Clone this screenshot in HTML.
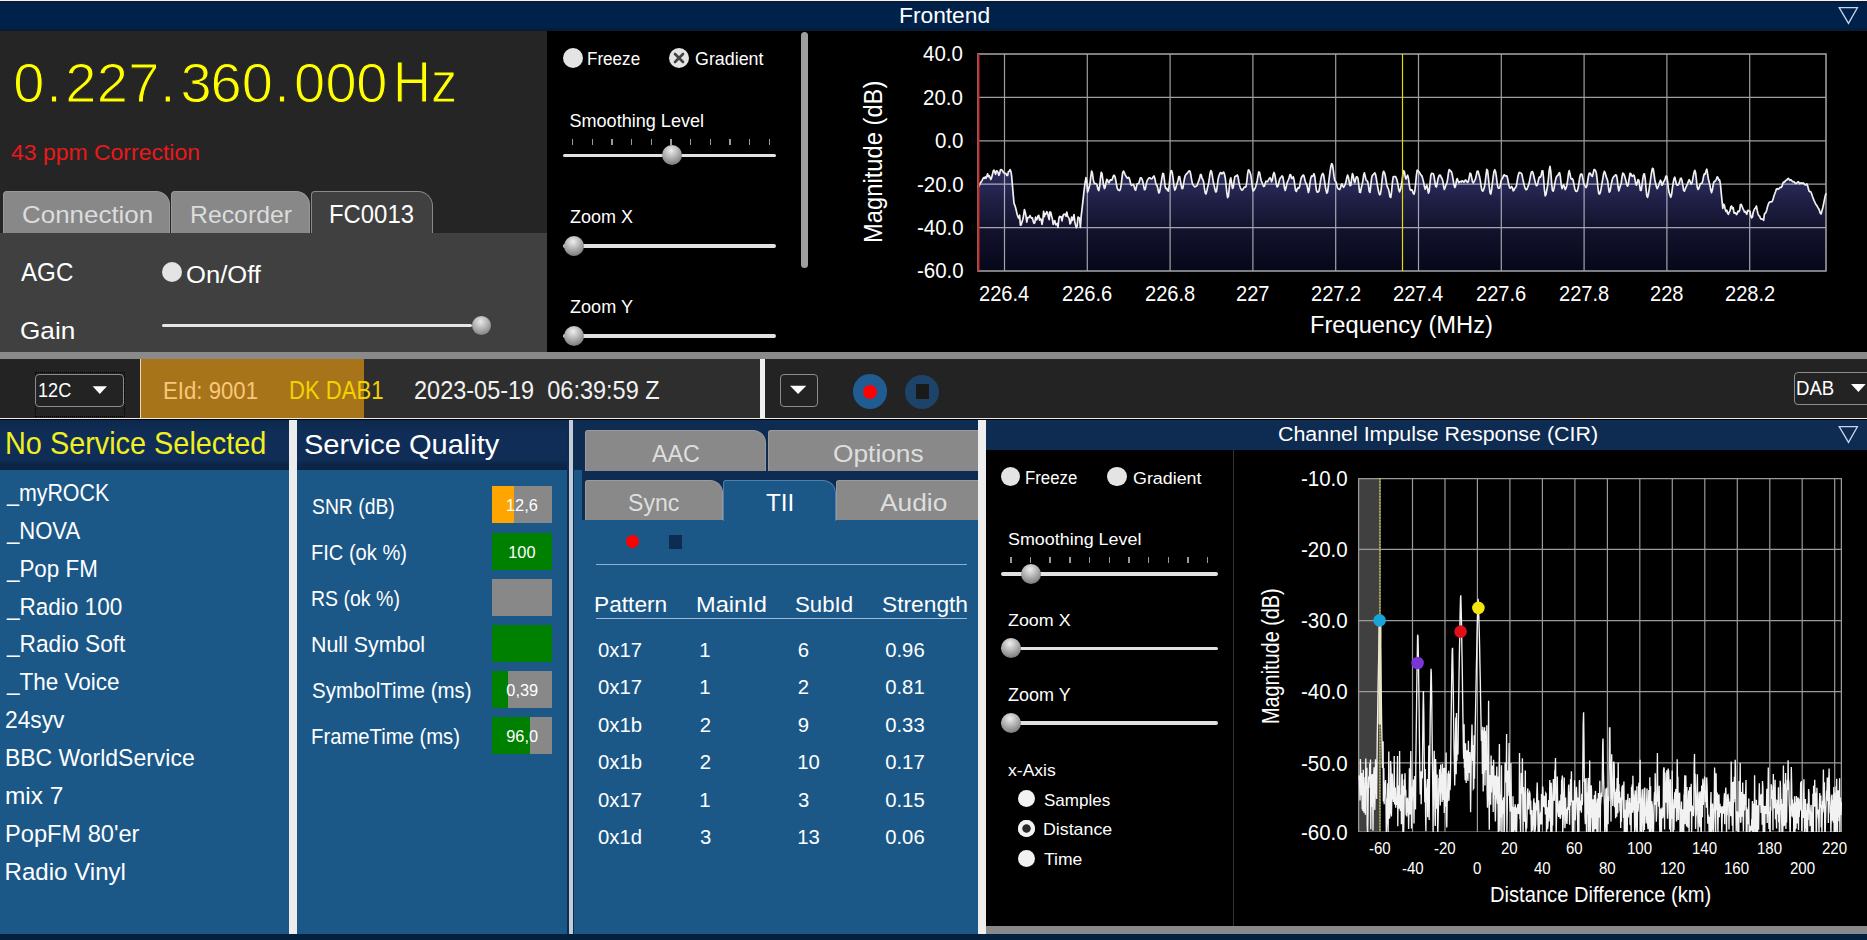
<!DOCTYPE html>
<html><head><meta charset="utf-8"><style>
html,body{margin:0;padding:0;}
body{width:1867px;height:940px;overflow:hidden;position:relative;background:#000;font-family:'Liberation Sans',sans-serif;}
body>div,body>svg{position:absolute;}
.t{white-space:nowrap;line-height:1;transform-origin:0 0;}
</style></head><body>
<div style="left:0px;top:0px;width:1867px;height:1px;background:#f4f4f4;"></div>
<div style="left:0px;top:1px;width:1867px;height:30px;background:linear-gradient(#081a33 0px,#00224a 4px,#00224a 26px,#0a1a30 30px);"></div>
<div class="t" style="left:898.62px;top:5px;font-size:22.07px;color:#fff;transform:scaleX(1.0314);">Frontend</div>
<svg style="left:1836px;top:5px" width="24" height="21"><path d="M3.2 2.7 L21.4 2.7 L12.5 18.4 Z" fill="none" stroke="#c8d6ec" stroke-width="1.3"/></svg>
<div style="left:0px;top:31px;width:547px;height:321px;background:#252525;"></div>
<div class="t" style="left:13.16px;top:55px;font-size:56px;color:#ffff00;-webkit-text-stroke:1.1px #252525;paint-order:normal">0</div>
<div class="t" style="left:65.30px;top:55px;font-size:56px;color:#ffff00;-webkit-text-stroke:1.1px #252525;paint-order:normal">2</div>
<div class="t" style="left:96.80px;top:55px;font-size:56px;color:#ffff00;-webkit-text-stroke:1.1px #252525;paint-order:normal">2</div>
<div class="t" style="left:128.30px;top:55px;font-size:56px;color:#ffff00;-webkit-text-stroke:1.1px #252525;paint-order:normal">7</div>
<div class="t" style="left:180.40px;top:55px;font-size:56px;color:#ffff00;-webkit-text-stroke:1.1px #252525;paint-order:normal">3</div>
<div class="t" style="left:210.60px;top:55px;font-size:56px;color:#ffff00;-webkit-text-stroke:1.1px #252525;paint-order:normal">6</div>
<div class="t" style="left:241.86px;top:55px;font-size:56px;color:#ffff00;-webkit-text-stroke:1.1px #252525;paint-order:normal">0</div>
<div class="t" style="left:293.96px;top:55px;font-size:56px;color:#ffff00;-webkit-text-stroke:1.1px #252525;paint-order:normal">0</div>
<div class="t" style="left:325.46px;top:55px;font-size:56px;color:#ffff00;-webkit-text-stroke:1.1px #252525;paint-order:normal">0</div>
<div class="t" style="left:356.26px;top:55px;font-size:56px;color:#ffff00;-webkit-text-stroke:1.1px #252525;paint-order:normal">0</div>
<div class="t" style="left:46.23px;top:55px;font-size:56px;color:#ffff00;-webkit-text-stroke:1.1px #252525">.</div>
<div class="t" style="left:159.93px;top:55px;font-size:56px;color:#ffff00;-webkit-text-stroke:1.1px #252525">.</div>
<div class="t" style="left:274.23px;top:55px;font-size:56px;color:#ffff00;-webkit-text-stroke:1.1px #252525">.</div>
<div class="t" style="left:392.77px;top:55px;font-size:56.73px;color:#ffff00;transform:scaleX(0.9251);-webkit-text-stroke:1.1px #252525;">Hz</div>
<div class="t" style="left:11.08px;top:143px;font-size:21.38px;color:#e8191b;transform:scaleX(1.0745);">43 ppm Correction</div>
<div style="left:0px;top:233px;width:547px;height:119px;background:#404040;"></div>
<div style="left:3px;top:191px;width:167px;height:42px;background:#888888;border-radius:4px 14px 0 0;box-sizing:border-box;border:1px solid #999;border-bottom:none;"></div>
<div style="left:171px;top:191px;width:139px;height:42px;background:#888888;border-radius:4px 14px 0 0;box-sizing:border-box;border:1px solid #999;border-bottom:none;"></div>
<div style="left:311px;top:191px;width:122px;height:42px;background:#404040;border-radius:4px 15px 0 0;box-sizing:border-box;border:1px solid #8a8a8a;border-bottom:none;"></div>
<div class="t" style="left:21.70px;top:203px;font-size:24.14px;color:#dcdcdc;transform:scaleX(1.0749);">Connection</div>
<div class="t" style="left:189.55px;top:203px;font-size:24.14px;color:#dcdcdc;transform:scaleX(1.0277);">Recorder</div>
<div class="t" style="left:328.53px;top:202px;font-size:25.09px;color:#ffffff;transform:scaleX(0.9522);">FC0013</div>
<div class="t" style="left:20.94px;top:259px;font-size:26.09px;color:#fff;transform:scaleX(0.9259);">AGC</div>
<div style="left:162px;top:262px;width:20px;height:20px;background:#e4e4e4;border-radius:50%;"></div>
<div class="t" style="left:186.48px;top:264px;font-size:23.17px;color:#fff;transform:scaleX(1.1049);">On/Off</div>
<div class="t" style="left:20.19px;top:320px;font-size:23.72px;color:#fff;transform:scaleX(1.1036);">Gain</div>
<div style="left:162px;top:324px;width:310px;height:3px;background:#e6e6e6;border-radius:2px;"></div>
<div style="left:472px;top:316px;width:19px;height:19px;background:radial-gradient(circle at 45% 30%,#e8e8e8 0%,#b0b0b0 45%,#6a6a6a 100%);border-radius:50%;"></div>
<div style="left:563px;top:48px;width:20px;height:20px;background:#e4e4e4;border-radius:50%;"></div>
<div class="t" style="left:586.59px;top:50px;font-size:18.47px;color:#fff;transform:scaleX(0.9249);">Freeze</div>
<div style="left:669px;top:48px;width:20px;height:20px;background:#e4e4e4;border-radius:50%;"></div>
<svg style="left:669px;top:48px" width="20" height="20"><path d="M6 6 L14 14 M14 6 L6 14" stroke="#444" stroke-width="2.6" stroke-linecap="round"/></svg>
<div class="t" style="left:694.71px;top:51px;font-size:17.52px;color:#fff;transform:scaleX(1.0186);">Gradient</div>
<div class="t" style="left:569.49px;top:112px;font-size:18.07px;color:#fff;">Smoothing Level</div>
<div style="left:563px;top:153.8px;width:213.39999999999998px;height:3.5px;background:#e2e2e2;border-radius:2px;"></div>
<div style="left:571.85px;top:139px;width:1.5px;height:6px;background:#9a9a9a;"></div>
<div style="left:591.53px;top:139px;width:1.5px;height:6px;background:#9a9a9a;"></div>
<div style="left:611.21px;top:139px;width:1.5px;height:6px;background:#9a9a9a;"></div>
<div style="left:630.89px;top:139px;width:1.5px;height:6px;background:#9a9a9a;"></div>
<div style="left:650.57px;top:139px;width:1.5px;height:6px;background:#9a9a9a;"></div>
<div style="left:670.25px;top:139px;width:1.5px;height:6px;background:#9a9a9a;"></div>
<div style="left:689.93px;top:139px;width:1.5px;height:6px;background:#9a9a9a;"></div>
<div style="left:709.61px;top:139px;width:1.5px;height:6px;background:#9a9a9a;"></div>
<div style="left:729.29px;top:139px;width:1.5px;height:6px;background:#9a9a9a;"></div>
<div style="left:748.97px;top:139px;width:1.5px;height:6px;background:#9a9a9a;"></div>
<div style="left:768.65px;top:139px;width:1.5px;height:6px;background:#9a9a9a;"></div>
<div style="left:661.5px;top:145.3px;width:20px;height:20px;background:radial-gradient(circle at 45% 28%,#eeeeee 0%,#b4b4b4 40%,#5e5e5e 100%);border-radius:50%;"></div>
<div class="t" style="left:569.72px;top:209px;font-size:17.60px;color:#fff;transform:scaleX(1.0218);">Zoom X</div>
<div style="left:563px;top:244.0px;width:213.39999999999998px;height:3.5px;background:#e2e2e2;border-radius:2px;"></div>
<div style="left:563.5px;top:235.5px;width:20px;height:20px;background:radial-gradient(circle at 45% 28%,#eeeeee 0%,#b4b4b4 40%,#5e5e5e 100%);border-radius:50%;"></div>
<div class="t" style="left:569.71px;top:299px;font-size:17.89px;color:#fff;transform:scaleX(1.0111);">Zoom Y</div>
<div style="left:563px;top:334.1px;width:213.39999999999998px;height:3.5px;background:#e2e2e2;border-radius:2px;"></div>
<div style="left:563.5px;top:325.6px;width:20px;height:20px;background:radial-gradient(circle at 45% 28%,#eeeeee 0%,#b4b4b4 40%,#5e5e5e 100%);border-radius:50%;"></div>
<div style="left:801px;top:32px;width:7px;height:236px;background:#9e9e9e;border-radius:4px;"></div>
<svg style="left:978px;top:54.2px;overflow:visible" width="848" height="217.0"><defs><linearGradient id="sg" gradientUnits="userSpaceOnUse" x1="0" y1="0" x2="0" y2="217"><stop offset="0.45" stop-color="#2c2c5e"/><stop offset="0.62" stop-color="#262652"/><stop offset="0.672" stop-color="#202046"/><stop offset="0.80" stop-color="#13132e"/><stop offset="1" stop-color="#07071a"/></linearGradient></defs><path d="M0.0 133.5 L0.8 132.4 L1.6 130.6 L2.4 128.9 L3.2 127.9 L4.0 126.6 L4.8 124.9 L5.6 123.7 L6.4 124.3 L7.2 122.8 L8.0 124.3 L8.8 122.2 L9.6 119.8 L10.4 122.7 L11.2 121.7 L12.0 123.5 L12.8 125.4 L13.6 123.6 L14.4 120.5 L15.2 117.1 L16.0 116.1 L16.8 118.2 L17.6 120.3 L18.4 116.9 L19.2 117.0 L20.0 118.4 L20.8 121.3 L21.6 119.8 L22.4 115.8 L23.2 115.6 L24.0 116.1 L24.8 117.1 L25.6 118.8 L26.4 119.0 L27.2 119.2 L28.0 119.7 L28.8 121.5 L29.6 121.5 L30.4 117.6 L31.2 117.5 L32.0 115.6 L32.8 117.1 L33.6 121.6 L34.4 131.0 L35.2 140.4 L36.0 149.4 L36.8 151.2 L37.6 153.8 L38.4 157.0 L39.2 160.5 L40.0 163.1 L40.8 164.3 L41.6 161.1 L42.4 171.2 L43.2 170.9 L44.0 167.9 L44.8 165.5 L45.6 161.5 L46.4 155.6 L47.2 158.0 L48.0 162.1 L48.8 168.2 L49.6 163.6 L50.4 163.7 L51.2 163.2 L52.0 161.6 L52.8 163.2 L53.6 164.2 L54.4 163.8 L55.2 167.4 L56.0 169.3 L56.8 168.8 L57.6 163.0 L58.4 166.0 L59.2 164.7 L60.0 162.0 L60.8 161.3 L61.6 166.1 L62.4 164.6 L63.2 165.5 L64.0 170.3 L64.8 166.5 L65.6 157.4 L66.4 162.6 L67.2 159.6 L68.0 160.1 L68.8 157.7 L69.6 158.8 L70.4 163.1 L71.2 165.6 L72.0 157.8 L72.8 158.5 L73.6 162.0 L74.4 165.1 L75.2 170.3 L76.0 167.5 L76.8 166.6 L77.6 170.6 L78.4 170.7 L79.2 169.5 L80.0 173.4 L80.8 165.1 L81.6 162.3 L82.4 163.3 L83.2 162.7 L84.0 166.8 L84.8 162.6 L85.6 160.3 L86.4 160.3 L87.2 160.2 L88.0 162.1 L88.8 158.0 L89.6 162.1 L90.4 163.4 L91.2 164.6 L92.0 169.9 L92.8 169.0 L93.6 163.0 L94.4 166.4 L95.2 164.2 L96.0 160.7 L96.8 167.9 L97.6 171.4 L98.4 173.6 L99.2 171.9 L100.0 163.1 L100.8 163.5 L101.6 164.4 L102.4 173.3 L103.2 161.9 L104.0 155.4 L104.8 148.4 L105.6 140.8 L106.4 133.8 L107.2 128.2 L108.0 123.7 L108.8 127.4 L109.6 138.1 L110.4 135.7 L111.2 133.1 L112.0 129.8 L112.8 122.6 L113.6 117.0 L114.4 119.1 L115.2 125.2 L116.0 128.6 L116.8 129.4 L117.6 129.7 L118.4 130.0 L119.2 131.7 L120.0 135.3 L120.8 136.7 L121.6 132.8 L122.4 124.8 L123.2 118.3 L124.0 119.4 L124.8 125.6 L125.6 131.3 L126.4 134.6 L127.2 133.3 L128.0 128.5 L128.8 125.3 L129.6 126.1 L130.4 128.6 L131.2 128.5 L132.0 126.3 L132.8 125.8 L133.6 126.2 L134.4 125.0 L135.2 122.3 L136.0 121.1 L136.8 122.3 L137.6 125.3 L138.4 130.0 L139.2 134.1 L140.0 135.7 L140.8 136.2 L141.6 136.6 L142.4 135.2 L143.2 130.6 L144.0 123.7 L144.8 118.2 L145.6 117.1 L146.4 118.8 L147.2 120.8 L148.0 122.2 L148.8 123.7 L149.6 124.1 L150.4 123.3 L151.2 124.0 L152.0 126.9 L152.8 130.3 L153.6 131.4 L154.4 130.9 L155.2 130.3 L156.0 131.7 L156.8 135.0 L157.6 136.2 L158.4 133.1 L159.2 129.7 L160.0 129.5 L160.8 129.2 L161.6 126.4 L162.4 123.8 L163.2 123.8 L164.0 125.1 L164.8 127.6 L165.6 131.7 L166.4 135.6 L167.2 135.4 L168.0 131.6 L168.8 127.8 L169.6 125.8 L170.4 124.6 L171.2 123.8 L172.0 123.8 L172.8 124.6 L173.6 124.8 L174.4 124.4 L175.2 122.9 L176.0 122.0 L176.8 124.2 L177.6 128.5 L178.4 130.9 L179.2 131.9 L180.0 135.3 L180.8 139.0 L181.6 137.9 L182.4 133.4 L183.2 128.6 L184.0 123.4 L184.8 119.4 L185.6 120.0 L186.4 126.0 L187.2 133.0 L188.0 134.7 L188.8 134.4 L189.6 136.6 L190.4 137.0 L191.2 131.4 L192.0 122.7 L192.8 116.9 L193.6 116.7 L194.4 119.5 L195.2 125.2 L196.0 132.4 L196.8 136.1 L197.6 134.7 L198.4 131.5 L199.2 129.4 L200.0 126.3 L200.8 122.7 L201.6 122.7 L202.4 126.9 L203.2 131.3 L204.0 134.6 L204.8 134.4 L205.6 129.9 L206.4 125.0 L207.2 121.7 L208.0 120.4 L208.8 119.8 L209.6 118.7 L210.4 117.7 L211.2 116.9 L212.0 117.2 L212.8 120.8 L213.6 125.6 L214.4 129.6 L215.2 131.0 L216.0 132.0 L216.8 132.9 L217.6 132.5 L218.4 132.1 L219.2 131.2 L220.0 128.7 L220.8 126.6 L221.6 124.4 L222.4 120.7 L223.2 120.7 L224.0 124.2 L224.8 125.5 L225.6 128.0 L226.4 133.9 L227.2 138.9 L228.0 139.9 L228.8 137.0 L229.6 133.3 L230.4 130.3 L231.2 125.5 L232.0 119.6 L232.8 116.6 L233.6 117.7 L234.4 122.1 L235.2 127.5 L236.0 130.9 L236.8 134.5 L237.6 137.9 L238.4 137.6 L239.2 132.6 L240.0 126.0 L240.8 122.3 L241.6 120.3 L242.4 118.6 L243.2 119.0 L244.0 119.9 L244.8 118.7 L245.6 118.1 L246.4 119.9 L247.2 123.7 L248.0 130.5 L248.8 138.3 L249.6 143.6 L250.4 142.4 L251.2 134.7 L252.0 126.4 L252.8 123.8 L253.6 128.8 L254.4 134.5 L255.2 133.6 L256.0 127.9 L256.8 122.8 L257.6 122.0 L258.4 122.1 L259.2 120.9 L260.0 122.7 L260.8 127.5 L261.6 131.5 L262.4 133.8 L263.2 135.4 L264.0 136.2 L264.8 135.5 L265.6 134.2 L266.4 133.1 L267.2 133.2 L268.0 132.6 L268.8 127.6 L269.6 119.9 L270.4 115.8 L271.2 116.5 L272.0 118.3 L272.8 121.1 L273.6 126.6 L274.4 133.7 L275.2 137.0 L276.0 136.0 L276.8 134.7 L277.6 133.0 L278.4 130.1 L279.2 126.7 L280.0 121.6 L280.8 117.9 L281.6 118.6 L282.4 122.9 L283.2 126.5 L284.0 128.5 L284.8 130.5 L285.6 132.3 L286.4 132.2 L287.2 129.5 L288.0 127.2 L288.8 127.5 L289.6 127.7 L290.4 126.0 L291.2 124.7 L292.0 123.7 L292.8 125.1 L293.6 127.8 L294.4 125.8 L295.2 120.7 L296.0 118.5 L296.8 120.6 L297.6 125.3 L298.4 130.5 L299.2 132.9 L300.0 131.9 L300.8 128.8 L301.6 125.4 L302.4 123.8 L303.2 123.0 L304.0 121.9 L304.8 122.9 L305.6 127.3 L306.4 133.6 L307.2 136.5 L308.0 134.0 L308.8 130.1 L309.6 127.5 L310.4 125.8 L311.2 123.5 L312.0 120.6 L312.8 121.0 L313.6 124.5 L314.4 124.4 L315.2 122.8 L316.0 125.5 L316.8 131.5 L317.6 136.7 L318.4 137.4 L319.2 135.0 L320.0 133.7 L320.8 134.3 L321.6 132.7 L322.4 127.6 L323.2 124.0 L324.0 122.5 L324.8 121.4 L325.6 121.1 L326.4 123.6 L327.2 127.2 L328.0 129.6 L328.8 130.5 L329.6 134.3 L330.4 138.5 L331.2 135.8 L332.0 128.7 L332.8 124.1 L333.6 122.0 L334.4 122.3 L335.2 121.6 L336.0 119.7 L336.8 122.9 L337.6 130.1 L338.4 136.1 L339.2 138.1 L340.0 138.0 L340.8 137.6 L341.6 133.8 L342.4 127.5 L343.2 123.4 L344.0 120.6 L344.8 119.4 L345.6 120.8 L346.4 126.0 L347.2 132.0 L348.0 136.0 L348.8 139.2 L349.6 137.8 L350.4 131.3 L351.2 124.2 L352.0 117.9 L352.8 112.8 L353.6 109.7 L354.4 110.4 L355.2 115.4 L356.0 122.2 L356.8 126.5 L357.6 127.5 L358.4 129.1 L359.2 132.9 L360.0 134.6 L360.8 135.1 L361.6 135.6 L362.4 134.2 L363.2 130.9 L364.0 129.9 L364.8 132.3 L365.6 133.3 L366.4 131.9 L367.2 130.4 L368.0 127.8 L368.8 123.7 L369.6 121.1 L370.4 123.2 L371.2 127.8 L372.0 131.6 L372.8 131.3 L373.6 125.2 L374.4 119.6 L375.2 121.3 L376.0 126.8 L376.8 128.6 L377.6 125.3 L378.4 122.9 L379.2 122.8 L380.0 124.5 L380.8 131.1 L381.6 138.3 L382.4 138.5 L383.2 134.3 L384.0 130.9 L384.8 127.3 L385.6 121.3 L386.4 118.8 L387.2 122.1 L388.0 125.8 L388.8 126.8 L389.6 127.4 L390.4 131.5 L391.2 137.5 L392.0 138.3 L392.8 131.7 L393.6 124.1 L394.4 121.2 L395.2 120.8 L396.0 119.6 L396.8 118.9 L397.6 120.7 L398.4 125.0 L399.2 130.1 L400.0 134.5 L400.8 138.5 L401.6 140.8 L402.4 140.1 L403.2 135.1 L404.0 127.0 L404.8 119.8 L405.6 117.3 L406.4 118.6 L407.2 121.5 L408.0 126.0 L408.8 130.9 L409.6 133.5 L410.4 134.7 L411.2 138.4 L412.0 142.8 L412.8 143.4 L413.6 137.6 L414.4 128.6 L415.2 122.8 L416.0 122.6 L416.8 122.6 L417.6 122.7 L418.4 124.3 L419.2 127.1 L420.0 130.9 L420.8 136.2 L421.6 137.8 L422.4 135.6 L423.2 132.0 L424.0 127.1 L424.8 121.1 L425.6 116.7 L426.4 117.7 L427.2 122.6 L428.0 125.0 L428.8 122.8 L429.6 121.2 L430.4 124.1 L431.2 130.3 L432.0 135.2 L432.8 136.3 L433.6 135.6 L434.4 136.6 L435.2 139.2 L436.0 140.2 L436.8 137.0 L437.6 130.0 L438.4 121.3 L439.2 116.2 L440.0 116.7 L440.8 117.7 L441.6 118.5 L442.4 120.4 L443.2 121.1 L444.0 122.1 L444.8 124.9 L445.6 128.2 L446.4 132.6 L447.2 135.3 L448.0 133.0 L448.8 131.1 L449.6 134.6 L450.4 139.1 L451.2 137.3 L452.0 129.3 L452.8 121.6 L453.6 119.4 L454.4 119.5 L455.2 119.5 L456.0 121.9 L456.8 127.4 L457.6 132.2 L458.4 133.0 L459.2 129.3 L460.0 124.8 L460.8 122.3 L461.6 121.0 L462.4 121.3 L463.2 123.2 L464.0 124.5 L464.8 126.9 L465.6 132.2 L466.4 135.5 L467.2 133.3 L468.0 130.9 L468.8 129.2 L469.6 125.3 L470.4 119.2 L471.2 115.5 L472.0 116.5 L472.8 117.1 L473.6 118.1 L474.4 121.4 L475.2 126.2 L476.0 131.1 L476.8 133.5 L477.6 131.9 L478.4 126.8 L479.2 124.5 L480.0 126.7 L480.8 128.6 L481.6 127.8 L482.4 127.6 L483.2 128.0 L484.0 126.8 L484.8 126.8 L485.6 128.2 L486.4 127.9 L487.2 126.2 L488.0 126.2 L488.8 127.6 L489.6 128.4 L490.4 127.4 L491.2 123.3 L492.0 119.1 L492.8 119.6 L493.6 123.5 L494.4 127.3 L495.2 129.0 L496.0 127.8 L496.8 126.4 L497.6 124.6 L498.4 120.7 L499.2 117.3 L500.0 117.1 L500.8 120.0 L501.6 122.8 L502.4 127.2 L503.2 132.8 L504.0 136.4 L504.8 137.1 L505.6 135.7 L506.4 133.1 L507.2 128.6 L508.0 121.2 L508.8 115.4 L509.6 116.5 L510.4 123.8 L511.2 132.0 L512.0 138.5 L512.8 140.1 L513.6 135.8 L514.4 129.2 L515.2 122.6 L516.0 117.6 L516.8 115.7 L517.6 117.7 L518.4 123.0 L519.2 129.7 L520.0 133.7 L520.8 134.2 L521.6 134.1 L522.4 131.0 L523.2 126.5 L524.0 124.8 L524.8 123.7 L525.6 121.4 L526.4 120.8 L527.2 121.9 L528.0 121.8 L528.8 121.8 L529.6 124.5 L530.4 128.8 L531.2 132.3 L532.0 134.2 L532.8 133.6 L533.6 132.4 L534.4 133.8 L535.2 136.8 L536.0 136.1 L536.8 134.1 L537.6 133.6 L538.4 131.7 L539.2 126.9 L540.0 122.2 L540.8 119.1 L541.6 118.3 L542.4 119.0 L543.2 119.0 L544.0 120.7 L544.8 124.9 L545.6 128.5 L546.4 131.9 L547.2 134.4 L548.0 135.7 L548.8 135.4 L549.6 133.5 L550.4 131.4 L551.2 128.8 L552.0 124.3 L552.8 120.3 L553.6 117.8 L554.4 117.6 L555.2 119.6 L556.0 123.0 L556.8 126.5 L557.6 129.5 L558.4 131.7 L559.2 131.3 L560.0 128.2 L560.8 124.5 L561.6 122.9 L562.4 123.2 L563.2 121.3 L564.0 116.8 L564.8 116.8 L565.6 124.7 L566.4 135.5 L567.2 141.8 L568.0 140.5 L568.8 136.0 L569.6 131.8 L570.4 124.9 L571.2 116.4 L572.0 112.3 L572.8 117.7 L573.6 129.1 L574.4 136.3 L575.2 137.2 L576.0 134.4 L576.8 129.8 L577.6 125.8 L578.4 122.9 L579.2 121.8 L580.0 121.3 L580.8 119.4 L581.6 118.7 L582.4 122.8 L583.2 130.6 L584.0 134.6 L584.8 132.7 L585.6 130.8 L586.4 133.0 L587.2 135.6 L588.0 134.2 L588.8 131.5 L589.6 126.8 L590.4 120.0 L591.2 116.7 L592.0 119.9 L592.8 124.2 L593.6 125.1 L594.4 124.6 L595.2 126.5 L596.0 130.8 L596.8 134.7 L597.6 137.1 L598.4 137.5 L599.2 137.0 L600.0 134.6 L600.8 130.0 L601.6 124.4 L602.4 120.9 L603.2 119.9 L604.0 120.4 L604.8 124.0 L605.6 128.7 L606.4 131.2 L607.2 132.1 L608.0 133.5 L608.8 132.2 L609.6 127.5 L610.4 122.5 L611.2 119.3 L612.0 119.1 L612.8 120.2 L613.6 121.8 L614.4 122.4 L615.2 119.1 L616.0 115.7 L616.8 115.7 L617.6 116.7 L618.4 119.6 L619.2 125.9 L620.0 134.3 L620.8 139.7 L621.6 140.0 L622.4 138.1 L623.2 134.1 L624.0 129.3 L624.8 124.7 L625.6 119.8 L626.4 117.4 L627.2 118.9 L628.0 122.1 L628.8 124.4 L629.6 126.6 L630.4 132.9 L631.2 138.2 L632.0 137.3 L632.8 133.1 L633.6 128.8 L634.4 125.3 L635.2 123.3 L636.0 122.5 L636.8 121.8 L637.6 120.8 L638.4 121.2 L639.2 125.2 L640.0 132.5 L640.8 136.8 L641.6 134.3 L642.4 131.8 L643.2 129.4 L644.0 123.2 L644.8 119.1 L645.6 119.6 L646.4 121.6 L647.2 124.0 L648.0 127.2 L648.8 130.8 L649.6 132.2 L650.4 129.7 L651.2 124.3 L652.0 119.4 L652.8 119.5 L653.6 121.9 L654.4 122.4 L655.2 121.2 L656.0 121.3 L656.8 124.3 L657.6 128.9 L658.4 131.2 L659.2 128.9 L660.0 125.6 L660.8 126.2 L661.6 131.1 L662.4 136.4 L663.2 136.4 L664.0 131.1 L664.8 124.8 L665.6 120.4 L666.4 119.8 L667.2 124.8 L668.0 134.4 L668.8 141.9 L669.6 143.4 L670.4 140.1 L671.2 135.1 L672.0 129.4 L672.8 123.5 L673.6 118.2 L674.4 114.3 L675.2 114.7 L676.0 120.0 L676.8 125.7 L677.6 129.3 L678.4 132.7 L679.2 134.6 L680.0 133.2 L680.8 131.0 L681.6 128.3 L682.4 126.2 L683.2 127.8 L684.0 131.2 L684.8 130.3 L685.6 127.7 L686.4 126.9 L687.2 124.6 L688.0 122.0 L688.8 122.3 L689.6 127.3 L690.4 134.8 L691.2 138.8 L692.0 141.1 L692.8 143.3 L693.6 140.6 L694.4 134.1 L695.2 128.9 L696.0 124.7 L696.8 123.2 L697.6 126.8 L698.4 130.1 L699.2 131.2 L700.0 131.1 L700.8 129.9 L701.6 127.6 L702.4 124.6 L703.2 124.2 L704.0 126.5 L704.8 131.3 L705.6 136.2 L706.4 137.1 L707.2 135.0 L708.0 133.1 L708.8 131.4 L709.6 129.6 L710.4 127.4 L711.2 125.7 L712.0 127.3 L712.8 129.8 L713.6 129.9 L714.4 127.2 L715.2 122.6 L716.0 118.6 L716.8 116.4 L717.6 118.7 L718.4 125.8 L719.2 133.0 L720.0 135.5 L720.8 134.5 L721.6 131.9 L722.4 129.5 L723.2 129.5 L724.0 129.3 L724.8 126.6 L725.6 122.1 L726.4 119.9 L727.2 120.1 L728.0 117.1 L728.8 115.2 L729.6 119.8 L730.4 125.3 L731.2 128.3 L732.0 131.6 L732.8 136.3 L733.6 138.6 L734.4 135.8 L735.2 130.6 L736.0 127.8 L736.8 127.2 L737.6 126.6 L738.4 125.2 L739.2 122.8 L740.0 123.6 L740.8 126.1 L741.6 125.9 L742.4 129.9 L743.2 138.6 L744.0 146.7 L744.8 154.3 L745.6 150.2 L746.4 151.1 L747.2 155.4 L748.0 157.4 L748.8 156.1 L749.6 159.2 L750.4 160.3 L751.2 158.2 L752.0 156.9 L752.8 152.8 L753.6 152.0 L754.4 154.7 L755.2 153.7 L756.0 158.9 L756.8 159.1 L757.6 158.8 L758.4 160.5 L759.2 159.8 L760.0 157.0 L760.8 157.7 L761.6 156.8 L762.4 150.5 L763.2 150.4 L764.0 152.3 L764.8 154.4 L765.6 155.8 L766.4 158.0 L767.2 157.4 L768.0 158.8 L768.8 160.3 L769.6 156.5 L770.4 156.3 L771.2 157.1 L772.0 157.3 L772.8 162.2 L773.6 163.8 L774.4 163.0 L775.2 158.2 L776.0 156.2 L776.8 154.5 L777.6 154.0 L778.4 152.0 L779.2 156.4 L780.0 159.7 L780.8 161.8 L781.6 162.0 L782.4 164.3 L783.2 165.2 L784.0 165.0 L784.8 165.1 L785.6 166.4 L786.4 160.1 L787.2 159.1 L788.0 158.2 L788.8 155.7 L789.6 152.4 L790.4 149.9 L791.2 148.5 L792.0 147.8 L792.8 147.9 L793.6 147.8 L794.4 147.0 L795.2 144.7 L796.0 141.7 L796.8 139.7 L797.6 137.5 L798.4 135.0 L799.2 134.7 L800.0 135.4 L800.8 134.9 L801.6 133.9 L802.4 133.3 L803.2 133.4 L804.0 132.3 L804.8 129.5 L805.6 128.0 L806.4 128.1 L807.2 127.1 L808.0 126.2 L808.8 126.1 L809.6 125.0 L810.4 124.3 L811.2 125.5 L812.0 126.3 L812.8 125.8 L813.6 126.4 L814.4 127.6 L815.2 127.6 L816.0 127.7 L816.8 128.8 L817.6 129.3 L818.4 129.2 L819.2 128.6 L820.0 127.7 L820.8 128.3 L821.6 129.6 L822.4 129.3 L823.2 128.8 L824.0 129.2 L824.8 129.0 L825.6 129.1 L826.4 130.1 L827.2 130.9 L828.0 130.8 L828.8 129.9 L829.6 131.7 L830.4 134.9 L831.2 137.2 L832.0 137.7 L832.8 137.8 L833.6 139.8 L834.4 142.3 L835.2 144.4 L836.0 146.3 L836.8 148.0 L837.6 150.0 L838.4 151.0 L839.2 152.3 L840.0 153.7 L840.8 154.9 L841.6 157.0 L842.4 159.5 L843.2 159.9 L844.0 156.6 L844.8 153.7 L845.6 150.0 L846.4 145.9 L847.2 142.3 L848.0 139.3 L848.0 217.0 L0 217.0 Z" fill="url(#sg)"/><path d="M26.5 0 V217.0 M109.3 0 V217.0 M192.1 0 V217.0 M274.9 0 V217.0 M357.7 0 V217.0 M440.5 0 V217.0 M523.3 0 V217.0 M606.1 0 V217.0 M688.9 0 V217.0 M771.7 0 V217.0 M0 43.4 H848 M0 86.8 H848 M0 130.2 H848 M0 173.6 H848" stroke="rgba(255,255,255,0.62)" stroke-width="1.2" fill="none"/><rect x="0" y="0" width="848" height="217.0" fill="none" stroke="#a6a6a6" stroke-width="1.5"/><path d="M0.0 133.5 L0.8 132.4 L1.6 130.6 L2.4 128.9 L3.2 127.9 L4.0 126.6 L4.8 124.9 L5.6 123.7 L6.4 124.3 L7.2 122.8 L8.0 124.3 L8.8 122.2 L9.6 119.8 L10.4 122.7 L11.2 121.7 L12.0 123.5 L12.8 125.4 L13.6 123.6 L14.4 120.5 L15.2 117.1 L16.0 116.1 L16.8 118.2 L17.6 120.3 L18.4 116.9 L19.2 117.0 L20.0 118.4 L20.8 121.3 L21.6 119.8 L22.4 115.8 L23.2 115.6 L24.0 116.1 L24.8 117.1 L25.6 118.8 L26.4 119.0 L27.2 119.2 L28.0 119.7 L28.8 121.5 L29.6 121.5 L30.4 117.6 L31.2 117.5 L32.0 115.6 L32.8 117.1 L33.6 121.6 L34.4 131.0 L35.2 140.4 L36.0 149.4 L36.8 151.2 L37.6 153.8 L38.4 157.0 L39.2 160.5 L40.0 163.1 L40.8 164.3 L41.6 161.1 L42.4 171.2 L43.2 170.9 L44.0 167.9 L44.8 165.5 L45.6 161.5 L46.4 155.6 L47.2 158.0 L48.0 162.1 L48.8 168.2 L49.6 163.6 L50.4 163.7 L51.2 163.2 L52.0 161.6 L52.8 163.2 L53.6 164.2 L54.4 163.8 L55.2 167.4 L56.0 169.3 L56.8 168.8 L57.6 163.0 L58.4 166.0 L59.2 164.7 L60.0 162.0 L60.8 161.3 L61.6 166.1 L62.4 164.6 L63.2 165.5 L64.0 170.3 L64.8 166.5 L65.6 157.4 L66.4 162.6 L67.2 159.6 L68.0 160.1 L68.8 157.7 L69.6 158.8 L70.4 163.1 L71.2 165.6 L72.0 157.8 L72.8 158.5 L73.6 162.0 L74.4 165.1 L75.2 170.3 L76.0 167.5 L76.8 166.6 L77.6 170.6 L78.4 170.7 L79.2 169.5 L80.0 173.4 L80.8 165.1 L81.6 162.3 L82.4 163.3 L83.2 162.7 L84.0 166.8 L84.8 162.6 L85.6 160.3 L86.4 160.3 L87.2 160.2 L88.0 162.1 L88.8 158.0 L89.6 162.1 L90.4 163.4 L91.2 164.6 L92.0 169.9 L92.8 169.0 L93.6 163.0 L94.4 166.4 L95.2 164.2 L96.0 160.7 L96.8 167.9 L97.6 171.4 L98.4 173.6 L99.2 171.9 L100.0 163.1 L100.8 163.5 L101.6 164.4 L102.4 173.3 L103.2 161.9 L104.0 155.4 L104.8 148.4 L105.6 140.8 L106.4 133.8 L107.2 128.2 L108.0 123.7 L108.8 127.4 L109.6 138.1 L110.4 135.7 L111.2 133.1 L112.0 129.8 L112.8 122.6 L113.6 117.0 L114.4 119.1 L115.2 125.2 L116.0 128.6 L116.8 129.4 L117.6 129.7 L118.4 130.0 L119.2 131.7 L120.0 135.3 L120.8 136.7 L121.6 132.8 L122.4 124.8 L123.2 118.3 L124.0 119.4 L124.8 125.6 L125.6 131.3 L126.4 134.6 L127.2 133.3 L128.0 128.5 L128.8 125.3 L129.6 126.1 L130.4 128.6 L131.2 128.5 L132.0 126.3 L132.8 125.8 L133.6 126.2 L134.4 125.0 L135.2 122.3 L136.0 121.1 L136.8 122.3 L137.6 125.3 L138.4 130.0 L139.2 134.1 L140.0 135.7 L140.8 136.2 L141.6 136.6 L142.4 135.2 L143.2 130.6 L144.0 123.7 L144.8 118.2 L145.6 117.1 L146.4 118.8 L147.2 120.8 L148.0 122.2 L148.8 123.7 L149.6 124.1 L150.4 123.3 L151.2 124.0 L152.0 126.9 L152.8 130.3 L153.6 131.4 L154.4 130.9 L155.2 130.3 L156.0 131.7 L156.8 135.0 L157.6 136.2 L158.4 133.1 L159.2 129.7 L160.0 129.5 L160.8 129.2 L161.6 126.4 L162.4 123.8 L163.2 123.8 L164.0 125.1 L164.8 127.6 L165.6 131.7 L166.4 135.6 L167.2 135.4 L168.0 131.6 L168.8 127.8 L169.6 125.8 L170.4 124.6 L171.2 123.8 L172.0 123.8 L172.8 124.6 L173.6 124.8 L174.4 124.4 L175.2 122.9 L176.0 122.0 L176.8 124.2 L177.6 128.5 L178.4 130.9 L179.2 131.9 L180.0 135.3 L180.8 139.0 L181.6 137.9 L182.4 133.4 L183.2 128.6 L184.0 123.4 L184.8 119.4 L185.6 120.0 L186.4 126.0 L187.2 133.0 L188.0 134.7 L188.8 134.4 L189.6 136.6 L190.4 137.0 L191.2 131.4 L192.0 122.7 L192.8 116.9 L193.6 116.7 L194.4 119.5 L195.2 125.2 L196.0 132.4 L196.8 136.1 L197.6 134.7 L198.4 131.5 L199.2 129.4 L200.0 126.3 L200.8 122.7 L201.6 122.7 L202.4 126.9 L203.2 131.3 L204.0 134.6 L204.8 134.4 L205.6 129.9 L206.4 125.0 L207.2 121.7 L208.0 120.4 L208.8 119.8 L209.6 118.7 L210.4 117.7 L211.2 116.9 L212.0 117.2 L212.8 120.8 L213.6 125.6 L214.4 129.6 L215.2 131.0 L216.0 132.0 L216.8 132.9 L217.6 132.5 L218.4 132.1 L219.2 131.2 L220.0 128.7 L220.8 126.6 L221.6 124.4 L222.4 120.7 L223.2 120.7 L224.0 124.2 L224.8 125.5 L225.6 128.0 L226.4 133.9 L227.2 138.9 L228.0 139.9 L228.8 137.0 L229.6 133.3 L230.4 130.3 L231.2 125.5 L232.0 119.6 L232.8 116.6 L233.6 117.7 L234.4 122.1 L235.2 127.5 L236.0 130.9 L236.8 134.5 L237.6 137.9 L238.4 137.6 L239.2 132.6 L240.0 126.0 L240.8 122.3 L241.6 120.3 L242.4 118.6 L243.2 119.0 L244.0 119.9 L244.8 118.7 L245.6 118.1 L246.4 119.9 L247.2 123.7 L248.0 130.5 L248.8 138.3 L249.6 143.6 L250.4 142.4 L251.2 134.7 L252.0 126.4 L252.8 123.8 L253.6 128.8 L254.4 134.5 L255.2 133.6 L256.0 127.9 L256.8 122.8 L257.6 122.0 L258.4 122.1 L259.2 120.9 L260.0 122.7 L260.8 127.5 L261.6 131.5 L262.4 133.8 L263.2 135.4 L264.0 136.2 L264.8 135.5 L265.6 134.2 L266.4 133.1 L267.2 133.2 L268.0 132.6 L268.8 127.6 L269.6 119.9 L270.4 115.8 L271.2 116.5 L272.0 118.3 L272.8 121.1 L273.6 126.6 L274.4 133.7 L275.2 137.0 L276.0 136.0 L276.8 134.7 L277.6 133.0 L278.4 130.1 L279.2 126.7 L280.0 121.6 L280.8 117.9 L281.6 118.6 L282.4 122.9 L283.2 126.5 L284.0 128.5 L284.8 130.5 L285.6 132.3 L286.4 132.2 L287.2 129.5 L288.0 127.2 L288.8 127.5 L289.6 127.7 L290.4 126.0 L291.2 124.7 L292.0 123.7 L292.8 125.1 L293.6 127.8 L294.4 125.8 L295.2 120.7 L296.0 118.5 L296.8 120.6 L297.6 125.3 L298.4 130.5 L299.2 132.9 L300.0 131.9 L300.8 128.8 L301.6 125.4 L302.4 123.8 L303.2 123.0 L304.0 121.9 L304.8 122.9 L305.6 127.3 L306.4 133.6 L307.2 136.5 L308.0 134.0 L308.8 130.1 L309.6 127.5 L310.4 125.8 L311.2 123.5 L312.0 120.6 L312.8 121.0 L313.6 124.5 L314.4 124.4 L315.2 122.8 L316.0 125.5 L316.8 131.5 L317.6 136.7 L318.4 137.4 L319.2 135.0 L320.0 133.7 L320.8 134.3 L321.6 132.7 L322.4 127.6 L323.2 124.0 L324.0 122.5 L324.8 121.4 L325.6 121.1 L326.4 123.6 L327.2 127.2 L328.0 129.6 L328.8 130.5 L329.6 134.3 L330.4 138.5 L331.2 135.8 L332.0 128.7 L332.8 124.1 L333.6 122.0 L334.4 122.3 L335.2 121.6 L336.0 119.7 L336.8 122.9 L337.6 130.1 L338.4 136.1 L339.2 138.1 L340.0 138.0 L340.8 137.6 L341.6 133.8 L342.4 127.5 L343.2 123.4 L344.0 120.6 L344.8 119.4 L345.6 120.8 L346.4 126.0 L347.2 132.0 L348.0 136.0 L348.8 139.2 L349.6 137.8 L350.4 131.3 L351.2 124.2 L352.0 117.9 L352.8 112.8 L353.6 109.7 L354.4 110.4 L355.2 115.4 L356.0 122.2 L356.8 126.5 L357.6 127.5 L358.4 129.1 L359.2 132.9 L360.0 134.6 L360.8 135.1 L361.6 135.6 L362.4 134.2 L363.2 130.9 L364.0 129.9 L364.8 132.3 L365.6 133.3 L366.4 131.9 L367.2 130.4 L368.0 127.8 L368.8 123.7 L369.6 121.1 L370.4 123.2 L371.2 127.8 L372.0 131.6 L372.8 131.3 L373.6 125.2 L374.4 119.6 L375.2 121.3 L376.0 126.8 L376.8 128.6 L377.6 125.3 L378.4 122.9 L379.2 122.8 L380.0 124.5 L380.8 131.1 L381.6 138.3 L382.4 138.5 L383.2 134.3 L384.0 130.9 L384.8 127.3 L385.6 121.3 L386.4 118.8 L387.2 122.1 L388.0 125.8 L388.8 126.8 L389.6 127.4 L390.4 131.5 L391.2 137.5 L392.0 138.3 L392.8 131.7 L393.6 124.1 L394.4 121.2 L395.2 120.8 L396.0 119.6 L396.8 118.9 L397.6 120.7 L398.4 125.0 L399.2 130.1 L400.0 134.5 L400.8 138.5 L401.6 140.8 L402.4 140.1 L403.2 135.1 L404.0 127.0 L404.8 119.8 L405.6 117.3 L406.4 118.6 L407.2 121.5 L408.0 126.0 L408.8 130.9 L409.6 133.5 L410.4 134.7 L411.2 138.4 L412.0 142.8 L412.8 143.4 L413.6 137.6 L414.4 128.6 L415.2 122.8 L416.0 122.6 L416.8 122.6 L417.6 122.7 L418.4 124.3 L419.2 127.1 L420.0 130.9 L420.8 136.2 L421.6 137.8 L422.4 135.6 L423.2 132.0 L424.0 127.1 L424.8 121.1 L425.6 116.7 L426.4 117.7 L427.2 122.6 L428.0 125.0 L428.8 122.8 L429.6 121.2 L430.4 124.1 L431.2 130.3 L432.0 135.2 L432.8 136.3 L433.6 135.6 L434.4 136.6 L435.2 139.2 L436.0 140.2 L436.8 137.0 L437.6 130.0 L438.4 121.3 L439.2 116.2 L440.0 116.7 L440.8 117.7 L441.6 118.5 L442.4 120.4 L443.2 121.1 L444.0 122.1 L444.8 124.9 L445.6 128.2 L446.4 132.6 L447.2 135.3 L448.0 133.0 L448.8 131.1 L449.6 134.6 L450.4 139.1 L451.2 137.3 L452.0 129.3 L452.8 121.6 L453.6 119.4 L454.4 119.5 L455.2 119.5 L456.0 121.9 L456.8 127.4 L457.6 132.2 L458.4 133.0 L459.2 129.3 L460.0 124.8 L460.8 122.3 L461.6 121.0 L462.4 121.3 L463.2 123.2 L464.0 124.5 L464.8 126.9 L465.6 132.2 L466.4 135.5 L467.2 133.3 L468.0 130.9 L468.8 129.2 L469.6 125.3 L470.4 119.2 L471.2 115.5 L472.0 116.5 L472.8 117.1 L473.6 118.1 L474.4 121.4 L475.2 126.2 L476.0 131.1 L476.8 133.5 L477.6 131.9 L478.4 126.8 L479.2 124.5 L480.0 126.7 L480.8 128.6 L481.6 127.8 L482.4 127.6 L483.2 128.0 L484.0 126.8 L484.8 126.8 L485.6 128.2 L486.4 127.9 L487.2 126.2 L488.0 126.2 L488.8 127.6 L489.6 128.4 L490.4 127.4 L491.2 123.3 L492.0 119.1 L492.8 119.6 L493.6 123.5 L494.4 127.3 L495.2 129.0 L496.0 127.8 L496.8 126.4 L497.6 124.6 L498.4 120.7 L499.2 117.3 L500.0 117.1 L500.8 120.0 L501.6 122.8 L502.4 127.2 L503.2 132.8 L504.0 136.4 L504.8 137.1 L505.6 135.7 L506.4 133.1 L507.2 128.6 L508.0 121.2 L508.8 115.4 L509.6 116.5 L510.4 123.8 L511.2 132.0 L512.0 138.5 L512.8 140.1 L513.6 135.8 L514.4 129.2 L515.2 122.6 L516.0 117.6 L516.8 115.7 L517.6 117.7 L518.4 123.0 L519.2 129.7 L520.0 133.7 L520.8 134.2 L521.6 134.1 L522.4 131.0 L523.2 126.5 L524.0 124.8 L524.8 123.7 L525.6 121.4 L526.4 120.8 L527.2 121.9 L528.0 121.8 L528.8 121.8 L529.6 124.5 L530.4 128.8 L531.2 132.3 L532.0 134.2 L532.8 133.6 L533.6 132.4 L534.4 133.8 L535.2 136.8 L536.0 136.1 L536.8 134.1 L537.6 133.6 L538.4 131.7 L539.2 126.9 L540.0 122.2 L540.8 119.1 L541.6 118.3 L542.4 119.0 L543.2 119.0 L544.0 120.7 L544.8 124.9 L545.6 128.5 L546.4 131.9 L547.2 134.4 L548.0 135.7 L548.8 135.4 L549.6 133.5 L550.4 131.4 L551.2 128.8 L552.0 124.3 L552.8 120.3 L553.6 117.8 L554.4 117.6 L555.2 119.6 L556.0 123.0 L556.8 126.5 L557.6 129.5 L558.4 131.7 L559.2 131.3 L560.0 128.2 L560.8 124.5 L561.6 122.9 L562.4 123.2 L563.2 121.3 L564.0 116.8 L564.8 116.8 L565.6 124.7 L566.4 135.5 L567.2 141.8 L568.0 140.5 L568.8 136.0 L569.6 131.8 L570.4 124.9 L571.2 116.4 L572.0 112.3 L572.8 117.7 L573.6 129.1 L574.4 136.3 L575.2 137.2 L576.0 134.4 L576.8 129.8 L577.6 125.8 L578.4 122.9 L579.2 121.8 L580.0 121.3 L580.8 119.4 L581.6 118.7 L582.4 122.8 L583.2 130.6 L584.0 134.6 L584.8 132.7 L585.6 130.8 L586.4 133.0 L587.2 135.6 L588.0 134.2 L588.8 131.5 L589.6 126.8 L590.4 120.0 L591.2 116.7 L592.0 119.9 L592.8 124.2 L593.6 125.1 L594.4 124.6 L595.2 126.5 L596.0 130.8 L596.8 134.7 L597.6 137.1 L598.4 137.5 L599.2 137.0 L600.0 134.6 L600.8 130.0 L601.6 124.4 L602.4 120.9 L603.2 119.9 L604.0 120.4 L604.8 124.0 L605.6 128.7 L606.4 131.2 L607.2 132.1 L608.0 133.5 L608.8 132.2 L609.6 127.5 L610.4 122.5 L611.2 119.3 L612.0 119.1 L612.8 120.2 L613.6 121.8 L614.4 122.4 L615.2 119.1 L616.0 115.7 L616.8 115.7 L617.6 116.7 L618.4 119.6 L619.2 125.9 L620.0 134.3 L620.8 139.7 L621.6 140.0 L622.4 138.1 L623.2 134.1 L624.0 129.3 L624.8 124.7 L625.6 119.8 L626.4 117.4 L627.2 118.9 L628.0 122.1 L628.8 124.4 L629.6 126.6 L630.4 132.9 L631.2 138.2 L632.0 137.3 L632.8 133.1 L633.6 128.8 L634.4 125.3 L635.2 123.3 L636.0 122.5 L636.8 121.8 L637.6 120.8 L638.4 121.2 L639.2 125.2 L640.0 132.5 L640.8 136.8 L641.6 134.3 L642.4 131.8 L643.2 129.4 L644.0 123.2 L644.8 119.1 L645.6 119.6 L646.4 121.6 L647.2 124.0 L648.0 127.2 L648.8 130.8 L649.6 132.2 L650.4 129.7 L651.2 124.3 L652.0 119.4 L652.8 119.5 L653.6 121.9 L654.4 122.4 L655.2 121.2 L656.0 121.3 L656.8 124.3 L657.6 128.9 L658.4 131.2 L659.2 128.9 L660.0 125.6 L660.8 126.2 L661.6 131.1 L662.4 136.4 L663.2 136.4 L664.0 131.1 L664.8 124.8 L665.6 120.4 L666.4 119.8 L667.2 124.8 L668.0 134.4 L668.8 141.9 L669.6 143.4 L670.4 140.1 L671.2 135.1 L672.0 129.4 L672.8 123.5 L673.6 118.2 L674.4 114.3 L675.2 114.7 L676.0 120.0 L676.8 125.7 L677.6 129.3 L678.4 132.7 L679.2 134.6 L680.0 133.2 L680.8 131.0 L681.6 128.3 L682.4 126.2 L683.2 127.8 L684.0 131.2 L684.8 130.3 L685.6 127.7 L686.4 126.9 L687.2 124.6 L688.0 122.0 L688.8 122.3 L689.6 127.3 L690.4 134.8 L691.2 138.8 L692.0 141.1 L692.8 143.3 L693.6 140.6 L694.4 134.1 L695.2 128.9 L696.0 124.7 L696.8 123.2 L697.6 126.8 L698.4 130.1 L699.2 131.2 L700.0 131.1 L700.8 129.9 L701.6 127.6 L702.4 124.6 L703.2 124.2 L704.0 126.5 L704.8 131.3 L705.6 136.2 L706.4 137.1 L707.2 135.0 L708.0 133.1 L708.8 131.4 L709.6 129.6 L710.4 127.4 L711.2 125.7 L712.0 127.3 L712.8 129.8 L713.6 129.9 L714.4 127.2 L715.2 122.6 L716.0 118.6 L716.8 116.4 L717.6 118.7 L718.4 125.8 L719.2 133.0 L720.0 135.5 L720.8 134.5 L721.6 131.9 L722.4 129.5 L723.2 129.5 L724.0 129.3 L724.8 126.6 L725.6 122.1 L726.4 119.9 L727.2 120.1 L728.0 117.1 L728.8 115.2 L729.6 119.8 L730.4 125.3 L731.2 128.3 L732.0 131.6 L732.8 136.3 L733.6 138.6 L734.4 135.8 L735.2 130.6 L736.0 127.8 L736.8 127.2 L737.6 126.6 L738.4 125.2 L739.2 122.8 L740.0 123.6 L740.8 126.1 L741.6 125.9 L742.4 129.9 L743.2 138.6 L744.0 146.7 L744.8 154.3 L745.6 150.2 L746.4 151.1 L747.2 155.4 L748.0 157.4 L748.8 156.1 L749.6 159.2 L750.4 160.3 L751.2 158.2 L752.0 156.9 L752.8 152.8 L753.6 152.0 L754.4 154.7 L755.2 153.7 L756.0 158.9 L756.8 159.1 L757.6 158.8 L758.4 160.5 L759.2 159.8 L760.0 157.0 L760.8 157.7 L761.6 156.8 L762.4 150.5 L763.2 150.4 L764.0 152.3 L764.8 154.4 L765.6 155.8 L766.4 158.0 L767.2 157.4 L768.0 158.8 L768.8 160.3 L769.6 156.5 L770.4 156.3 L771.2 157.1 L772.0 157.3 L772.8 162.2 L773.6 163.8 L774.4 163.0 L775.2 158.2 L776.0 156.2 L776.8 154.5 L777.6 154.0 L778.4 152.0 L779.2 156.4 L780.0 159.7 L780.8 161.8 L781.6 162.0 L782.4 164.3 L783.2 165.2 L784.0 165.0 L784.8 165.1 L785.6 166.4 L786.4 160.1 L787.2 159.1 L788.0 158.2 L788.8 155.7 L789.6 152.4 L790.4 149.9 L791.2 148.5 L792.0 147.8 L792.8 147.9 L793.6 147.8 L794.4 147.0 L795.2 144.7 L796.0 141.7 L796.8 139.7 L797.6 137.5 L798.4 135.0 L799.2 134.7 L800.0 135.4 L800.8 134.9 L801.6 133.9 L802.4 133.3 L803.2 133.4 L804.0 132.3 L804.8 129.5 L805.6 128.0 L806.4 128.1 L807.2 127.1 L808.0 126.2 L808.8 126.1 L809.6 125.0 L810.4 124.3 L811.2 125.5 L812.0 126.3 L812.8 125.8 L813.6 126.4 L814.4 127.6 L815.2 127.6 L816.0 127.7 L816.8 128.8 L817.6 129.3 L818.4 129.2 L819.2 128.6 L820.0 127.7 L820.8 128.3 L821.6 129.6 L822.4 129.3 L823.2 128.8 L824.0 129.2 L824.8 129.0 L825.6 129.1 L826.4 130.1 L827.2 130.9 L828.0 130.8 L828.8 129.9 L829.6 131.7 L830.4 134.9 L831.2 137.2 L832.0 137.7 L832.8 137.8 L833.6 139.8 L834.4 142.3 L835.2 144.4 L836.0 146.3 L836.8 148.0 L837.6 150.0 L838.4 151.0 L839.2 152.3 L840.0 153.7 L840.8 154.9 L841.6 157.0 L842.4 159.5 L843.2 159.9 L844.0 156.6 L844.8 153.7 L845.6 150.0 L846.4 145.9 L847.2 142.3 L848.0 139.3" stroke="#f0f0f0" stroke-width="1.7" fill="none" stroke-linejoin="round"/><path d="M0.5 0 V217.0" stroke="#c0302a" stroke-width="2"/><path d="M424.5 0 V217.0" stroke="#e0e000" stroke-width="1.2"/></svg>
<div class="t" style="left:923.39px;top:43px;font-size:21.65px;color:#fff;transform:scaleX(0.9470);">40.0</div>
<div class="t" style="left:923.39px;top:87px;font-size:21.65px;color:#fff;transform:scaleX(0.9470);">20.0</div>
<div class="t" style="left:934.77px;top:130px;font-size:21.65px;color:#fff;transform:scaleX(0.9470);">0.0</div>
<div class="t" style="left:916.57px;top:174px;font-size:21.65px;color:#fff;transform:scaleX(0.9470);">-20.0</div>
<div class="t" style="left:916.57px;top:217px;font-size:21.65px;color:#fff;transform:scaleX(0.9470);">-40.0</div>
<div class="t" style="left:916.57px;top:260px;font-size:21.65px;color:#fff;transform:scaleX(0.9470);">-60.0</div>
<div class="t" style="left:979.15px;top:284px;font-size:21.36px;color:#fff;transform:scaleX(0.9400);">226.4</div>
<div class="t" style="left:1062.10px;top:284px;font-size:21.36px;color:#fff;transform:scaleX(0.9400);">226.6</div>
<div class="t" style="left:1144.90px;top:284px;font-size:21.36px;color:#fff;transform:scaleX(0.9400);">226.8</div>
<div class="t" style="left:1236.16px;top:284px;font-size:21.36px;color:#fff;transform:scaleX(0.9400);">227</div>
<div class="t" style="left:1310.58px;top:284px;font-size:21.36px;color:#fff;transform:scaleX(0.9400);">227.2</div>
<div class="t" style="left:1393.15px;top:284px;font-size:21.36px;color:#fff;transform:scaleX(0.9400);">227.4</div>
<div class="t" style="left:1476.10px;top:284px;font-size:21.36px;color:#fff;transform:scaleX(0.9400);">227.6</div>
<div class="t" style="left:1558.90px;top:284px;font-size:21.36px;color:#fff;transform:scaleX(0.9400);">227.8</div>
<div class="t" style="left:1650.08px;top:284px;font-size:21.36px;color:#fff;transform:scaleX(0.9400);">228</div>
<div class="t" style="left:1724.58px;top:284px;font-size:21.36px;color:#fff;transform:scaleX(0.9400);">228.2</div>
<div class="t" style="left:1309.95px;top:313px;font-size:24.73px;color:#fff;transform:scaleX(0.9582);">Frequency (MHz)</div>
<div class="t" style="left:860.80px;top:243.36px;font-size:25.60px;color:#fff;transform:rotate(-90deg) scaleX(0.9277)">Magnitude (dB)</div>
<div style="left:0px;top:352px;width:1867px;height:7px;background:#8a8a8a;"></div>
<div style="left:0px;top:359px;width:1867px;height:59px;background:#232323;"></div>
<div style="left:364px;top:359px;width:396px;height:59px;background:#2e2e2e;"></div>
<div style="left:140px;top:359px;width:224px;height:59px;background:#a8741a;"></div>
<div style="left:140px;top:359px;width:1px;height:59px;background:#e8d8b8;"></div>
<div style="left:760px;top:359px;width:5px;height:59px;background:#f0f0f0;"></div>
<div style="left:0px;top:418px;width:1867px;height:1.3px;background:#ececec;"></div>
<div style="left:35px;top:372px;width:90px;height:45px;background:transparent;box-sizing:border-box;border:1px dotted #000;"></div>
<div style="left:35px;top:374px;width:89px;height:33px;background:transparent;box-sizing:border-box;border:1.5px solid #8c8c8c;border-radius:4px;"></div>
<div class="t" style="left:37.64px;top:380px;font-size:20.07px;color:#fff;transform:scaleX(0.9024);">12C</div>
<svg style="left:90px;top:384px" width="20" height="12"><path d="M2.6 2.2 L17 2.2 L9.8 9.9 Z" fill="#fff"/></svg>
<div class="t" style="left:162.67px;top:380px;font-size:23.59px;color:#f8c878;transform:scaleX(0.9409);">EId: 9001</div>
<div class="t" style="left:288.88px;top:378px;font-size:24.87px;color:#f2d200;transform:scaleX(0.8879);">DK DAB1</div>
<div class="t" style="left:414.42px;top:378px;font-size:24.95px;color:#f2f2f2;transform:scaleX(0.9422);">2023-05-19&#160;&#160;06:39:59 Z</div>
<div style="left:780px;top:374px;width:37.5px;height:33px;background:transparent;box-sizing:border-box;border:1.5px solid #8c8c8c;border-radius:4px;"></div>
<svg style="left:788px;top:384px" width="20" height="12"><path d="M2 1.8 L18.3 1.8 L10.1 10.1 Z" fill="#fff"/></svg>
<div style="left:852.8px;top:374.4px;width:34.4px;height:34.4px;background:#1f5c92;border-radius:50%;"></div>
<div style="left:863px;top:384.6px;width:14px;height:14px;background:#ff0000;border-radius:50%;"></div>
<div style="left:905.3px;top:374.6px;width:34px;height:34px;background:#1d4468;border-radius:50%;"></div>
<div style="left:916px;top:383.8px;width:12.6px;height:15px;background:#1a1a1a;"></div>
<div style="left:1794px;top:372.3px;width:90px;height:32.4px;background:transparent;box-sizing:border-box;border:1.5px solid #8c8c8c;border-radius:4px;"></div>
<div class="t" style="left:1795.96px;top:379px;font-size:19.49px;color:#fff;transform:scaleX(0.9554);">DAB</div>
<svg style="left:1849px;top:382px" width="20" height="12"><path d="M2 2 L16.7 2 L9.4 9.9 Z" fill="#fff"/></svg>
<div style="left:0px;top:419.5px;width:1867px;height:514.5px;background:#1b5888;"></div>
<div style="left:0px;top:934px;width:1867px;height:6px;background:#03203f;"></div>
<div style="left:0px;top:419.5px;width:289px;height:50.5px;background:linear-gradient(#0c284c 0px,#0f2d56 12px,#0f2d56 40px,#0b2648 44px,#0a2446 50px);"></div>
<div class="t" style="left:4.52px;top:428px;font-size:31.86px;color:#f0f020;transform:scaleX(0.9055);">No Service Selected</div>
<div class="t" style="left:6.82px;top:481px;font-size:24.10px;color:#fff;transform:scaleX(0.8876);">_myROCK</div>
<div class="t" style="left:6.83px;top:519px;font-size:24.10px;color:#fff;transform:scaleX(0.9159);">_NOVA</div>
<div class="t" style="left:6.84px;top:557px;font-size:24.10px;color:#fff;transform:scaleX(0.9287);">_Pop FM</div>
<div class="t" style="left:6.84px;top:595px;font-size:24.10px;color:#fff;transform:scaleX(0.9346);">_Radio 100</div>
<div class="t" style="left:6.84px;top:632px;font-size:24.10px;color:#fff;transform:scaleX(0.9405);">_Radio Soft</div>
<div class="t" style="left:6.84px;top:670px;font-size:24.10px;color:#fff;transform:scaleX(0.9333);">_The Voice</div>
<div class="t" style="left:5.36px;top:708px;font-size:24.10px;color:#fff;transform:scaleX(0.9450);">24syv</div>
<div class="t" style="left:4.61px;top:746px;font-size:24.10px;color:#fff;transform:scaleX(0.9528);">BBC WorldService</div>
<div class="t" style="left:4.85px;top:784px;font-size:24.10px;color:#fff;transform:scaleX(1.0145);">mix 7</div>
<div class="t" style="left:4.55px;top:822px;font-size:24.10px;color:#fff;transform:scaleX(0.9804);">PopFM 80'er</div>
<div class="t" style="left:4.52px;top:860px;font-size:24.10px;color:#fff;">Radio Vinyl</div>
<div style="left:289px;top:419.5px;width:8px;height:514.5px;background:#ececec;"></div>
<div style="left:297px;top:419.5px;width:269.8px;height:50.5px;background:linear-gradient(#0c284c 0px,#0f2d56 12px,#0f2d56 40px,#0b2648 44px,#0a2446 50px);"></div>
<div class="t" style="left:303.99px;top:430px;font-size:28.55px;color:#fff;transform:scaleX(1.0175);">Service Quality</div>
<div style="left:566.8px;top:419.5px;width:2px;height:514.5px;background:#0e2b52;"></div>
<div style="left:568.8px;top:419.5px;width:4.3px;height:514.5px;background:#c4ccd6;"></div>
<div style="left:573.1px;top:419.5px;width:1.4px;height:514.5px;background:#0e2b52;"></div>
<div class="t" style="left:312.03px;top:496px;font-size:22.10px;color:#fff;transform:scaleX(0.8752);">SNR (dB)</div>
<div class="t" style="left:311.24px;top:542px;font-size:22.10px;color:#fff;transform:scaleX(0.9089);">FIC (ok %)</div>
<div class="t" style="left:311.29px;top:588px;font-size:22.10px;color:#fff;transform:scaleX(0.8829);">RS (ok %)</div>
<div class="t" style="left:311.14px;top:634px;font-size:22.10px;color:#fff;transform:scaleX(0.9678);">Null Symbol</div>
<div class="t" style="left:311.98px;top:680px;font-size:22.10px;color:#fff;transform:scaleX(0.9262);">SymbolTime (ms)</div>
<div class="t" style="left:311.23px;top:726px;font-size:22.10px;color:#fff;transform:scaleX(0.9172);">FrameTime (ms)</div>
<div style="left:492px;top:486px;width:59.7px;height:37.2px;background:#888888;"></div>
<div style="left:492px;top:486px;width:22.2px;height:37.2px;background:#ffa500;"></div>
<div class="t" style="left:506.04px;top:497px;font-size:16.34px;color:#fff;">12,6</div>
<div style="left:492px;top:532.7px;width:59.7px;height:37.2px;background:#888888;"></div>
<div style="left:492px;top:532.7px;width:60px;height:37.2px;background:#008000;"></div>
<div class="t" style="left:508.27px;top:544px;font-size:16.34px;color:#fff;">100</div>
<div style="left:492px;top:579px;width:59.7px;height:37.2px;background:#888888;"></div>
<div style="left:492px;top:624.5px;width:59.7px;height:37.2px;background:#888888;"></div>
<div style="left:492px;top:624.5px;width:60px;height:37.2px;background:#008000;"></div>
<div style="left:492px;top:670.6px;width:59.7px;height:37.2px;background:#888888;"></div>
<div style="left:492px;top:670.6px;width:15.7px;height:37.2px;background:#008000;"></div>
<div class="t" style="left:506.35px;top:682px;font-size:16.34px;color:#fff;">0,39</div>
<div style="left:492px;top:716.7px;width:59.7px;height:37.2px;background:#888888;"></div>
<div style="left:492px;top:716.7px;width:37.8px;height:37.2px;background:#008000;"></div>
<div class="t" style="left:506.22px;top:728px;font-size:16.34px;color:#fff;">96,0</div>
<div style="left:573.5px;top:419.5px;width:404.5px;height:50.5px;background:#0e2b52;"></div>
<div style="left:582px;top:470px;width:396px;height:50px;background:#0e2b52;"></div>
<div style="left:585.3px;top:430.3px;width:181px;height:40.6px;background:#898989;box-sizing:border-box;border:1px solid #9a9a9a;border-bottom:none;border-radius:3px 13px 0 0;"></div>
<div style="left:767.9px;top:430.3px;width:210.1px;height:40.6px;background:#898989;box-sizing:border-box;border:1px solid #9a9a9a;border-bottom:none;border-right:none;border-radius:3px 0 0 0;"></div>
<div style="left:585.3px;top:479.5px;width:138px;height:40.6px;background:#898989;box-sizing:border-box;border:1px solid #9a9a9a;border-bottom:none;border-radius:3px 13px 0 0;"></div>
<div style="left:836.4px;top:479.5px;width:141.6px;height:40.6px;background:#898989;box-sizing:border-box;border:1px solid #9a9a9a;border-bottom:none;border-right:none;border-radius:3px 0 0 0;"></div>
<div style="left:723.3px;top:479.5px;width:112.3px;height:41.6px;background:#1b5888;box-sizing:border-box;border:1px solid #4f7fae;border-bottom:none;border-radius:3px 13px 0 0;"></div>
<div class="t" style="left:652.44px;top:442px;font-size:24.60px;color:#dedede;transform:scaleX(0.9450);">AAC</div>
<div class="t" style="left:833.25px;top:442px;font-size:24.60px;color:#dedede;transform:scaleX(1.0691);">Options</div>
<div class="t" style="left:628.16px;top:491px;font-size:24.60px;color:#dedede;transform:scaleX(0.9397);">Sync</div>
<div class="t" style="left:765.95px;top:491px;font-size:24.60px;color:#ffffff;transform:scaleX(0.9872);">TII</div>
<div class="t" style="left:879.93px;top:491px;font-size:24.60px;color:#dedede;transform:scaleX(1.0700);">Audio</div>
<div style="left:625.9px;top:535.1px;width:13px;height:13px;background:#ff0000;border-radius:50%;"></div>
<div style="left:669px;top:535px;width:13px;height:13.5px;background:#0e2b52;"></div>
<div style="left:595.7px;top:563.8px;width:371px;height:1.2px;background:#8db0d2;"></div>
<div class="t" style="left:594.23px;top:594px;font-size:22.20px;color:#fff;transform:scaleX(1.0231);">Pattern</div>
<div class="t" style="left:695.55px;top:594px;font-size:22.20px;color:#fff;transform:scaleX(1.0650);">MainId</div>
<div class="t" style="left:795.00px;top:594px;font-size:22.20px;color:#fff;">SubId</div>
<div class="t" style="left:882.18px;top:594px;font-size:22.20px;color:#fff;transform:scaleX(1.0254);">Strength</div>
<div style="left:596px;top:618.1px;width:371px;height:1.2px;background:#9ab8d8;"></div>
<div class="t" style="left:598.09px;top:640px;font-size:20.30px;color:#fff;">0x17</div>
<div class="t" style="left:699.18px;top:640px;font-size:20.30px;color:#fff;">1</div>
<div class="t" style="left:797.78px;top:640px;font-size:20.30px;color:#fff;">6</div>
<div class="t" style="left:885.19px;top:640px;font-size:20.30px;color:#fff;">0.96</div>
<div class="t" style="left:598.09px;top:677px;font-size:20.30px;color:#fff;">0x17</div>
<div class="t" style="left:699.18px;top:677px;font-size:20.30px;color:#fff;">1</div>
<div class="t" style="left:797.78px;top:677px;font-size:20.30px;color:#fff;">2</div>
<div class="t" style="left:885.19px;top:677px;font-size:20.30px;color:#fff;">0.81</div>
<div class="t" style="left:598.09px;top:715px;font-size:20.30px;color:#fff;">0x1b</div>
<div class="t" style="left:699.68px;top:715px;font-size:20.30px;color:#fff;">2</div>
<div class="t" style="left:797.84px;top:715px;font-size:20.30px;color:#fff;">9</div>
<div class="t" style="left:885.19px;top:715px;font-size:20.30px;color:#fff;">0.33</div>
<div class="t" style="left:598.09px;top:752px;font-size:20.30px;color:#fff;">0x1b</div>
<div class="t" style="left:699.68px;top:752px;font-size:20.30px;color:#fff;">2</div>
<div class="t" style="left:797.28px;top:752px;font-size:20.30px;color:#fff;">10</div>
<div class="t" style="left:885.19px;top:752px;font-size:20.30px;color:#fff;">0.17</div>
<div class="t" style="left:598.09px;top:790px;font-size:20.30px;color:#fff;">0x17</div>
<div class="t" style="left:699.18px;top:790px;font-size:20.30px;color:#fff;">1</div>
<div class="t" style="left:798.04px;top:790px;font-size:20.30px;color:#fff;">3</div>
<div class="t" style="left:885.19px;top:790px;font-size:20.30px;color:#fff;">0.15</div>
<div class="t" style="left:598.09px;top:827px;font-size:20.30px;color:#fff;">0x1d</div>
<div class="t" style="left:699.94px;top:827px;font-size:20.30px;color:#fff;">3</div>
<div class="t" style="left:797.28px;top:827px;font-size:20.30px;color:#fff;">13</div>
<div class="t" style="left:885.19px;top:827px;font-size:20.30px;color:#fff;">0.06</div>
<div style="left:978px;top:419.5px;width:7.5px;height:514.5px;background:#eeeeee;"></div>
<div style="left:985.5px;top:419.5px;width:881.5px;height:30.3px;background:#0e2b52;"></div>
<div style="left:985.5px;top:449.8px;width:881.5px;height:476.2px;background:#000;"></div>
<div style="left:985.5px;top:926px;width:881.5px;height:7.5px;background:#8a8a8a;"></div>
<div class="t" style="left:1278.23px;top:424px;font-size:20.55px;color:#fff;transform:scaleX(1.0417);">Channel Impulse Response (CIR)</div>
<svg style="left:1836px;top:424px" width="24" height="21"><path d="M3.2 2.7 L21.4 2.7 L12.5 18.4 Z" fill="none" stroke="#c8d6ec" stroke-width="1.3"/></svg>
<div style="left:1233px;top:449px;width:1px;height:477px;background:#333333;"></div>
<div style="left:1000.9px;top:466.6px;width:19.5px;height:19.5px;background:#e4e4e4;border-radius:50%;"></div>
<div class="t" style="left:1025.31px;top:470px;font-size:17.60px;color:#fff;transform:scaleX(0.9555);">Freeze</div>
<div style="left:1107px;top:466.6px;width:19.5px;height:19.5px;background:#e4e4e4;border-radius:50%;"></div>
<div class="t" style="left:1132.71px;top:471px;font-size:16.69px;color:#fff;transform:scaleX(1.0691);">Gradient</div>
<div class="t" style="left:1007.69px;top:531px;font-size:17.10px;color:#fff;transform:scaleX(1.0478);">Smoothing Level</div>
<div style="left:1001px;top:572.0px;width:216.79999999999995px;height:3.5px;background:#e2e2e2;border-radius:2px;"></div>
<div style="left:1010.05px;top:557px;width:1.5px;height:6px;background:#9a9a9a;"></div>
<div style="left:1029.74px;top:557px;width:1.5px;height:6px;background:#9a9a9a;"></div>
<div style="left:1049.43px;top:557px;width:1.5px;height:6px;background:#9a9a9a;"></div>
<div style="left:1069.12px;top:557px;width:1.5px;height:6px;background:#9a9a9a;"></div>
<div style="left:1088.81px;top:557px;width:1.5px;height:6px;background:#9a9a9a;"></div>
<div style="left:1108.5px;top:557px;width:1.5px;height:6px;background:#9a9a9a;"></div>
<div style="left:1128.19px;top:557px;width:1.5px;height:6px;background:#9a9a9a;"></div>
<div style="left:1147.88px;top:557px;width:1.5px;height:6px;background:#9a9a9a;"></div>
<div style="left:1167.57px;top:557px;width:1.5px;height:6px;background:#9a9a9a;"></div>
<div style="left:1187.26px;top:557px;width:1.5px;height:6px;background:#9a9a9a;"></div>
<div style="left:1206.95px;top:557px;width:1.5px;height:6px;background:#9a9a9a;"></div>
<div style="left:1020.5px;top:563.5px;width:20px;height:20px;background:radial-gradient(circle at 45% 28%,#eeeeee 0%,#b4b4b4 40%,#5e5e5e 100%);border-radius:50%;"></div>
<div class="t" style="left:1007.62px;top:612px;font-size:17.31px;color:#fff;transform:scaleX(1.0340);">Zoom X</div>
<div style="left:1001px;top:646.7px;width:216.79999999999995px;height:3.5px;background:#e2e2e2;border-radius:2px;"></div>
<div style="left:1001.2px;top:638.2px;width:20px;height:20px;background:radial-gradient(circle at 45% 28%,#eeeeee 0%,#b4b4b4 40%,#5e5e5e 100%);border-radius:50%;"></div>
<div class="t" style="left:1007.61px;top:687px;font-size:17.45px;color:#fff;transform:scaleX(1.0313);">Zoom Y</div>
<div style="left:1001px;top:721.2px;width:216.79999999999995px;height:3.5px;background:#e2e2e2;border-radius:2px;"></div>
<div style="left:1001.2px;top:712.7px;width:20px;height:20px;background:radial-gradient(circle at 45% 28%,#eeeeee 0%,#b4b4b4 40%,#5e5e5e 100%);border-radius:50%;"></div>
<div class="t" style="left:1007.78px;top:762px;font-size:16.41px;color:#fff;transform:scaleX(1.0704);">x-Axis</div>
<div style="left:1017.5px;top:790.4px;width:17px;height:17px;background:#f2f2f2;border-radius:50%;"></div>
<div style="left:1017.5px;top:820.1999999999999px;width:17px;height:17px;background:#f2f2f2;border-radius:50%;"></div>
<div style="left:1017.5px;top:820.1999999999999px;width:17px;height:17px;background:radial-gradient(circle,#2a2a2a 0 3.8px,#f2f2f2 4.6px);border-radius:50%;"></div>
<div style="left:1017.5px;top:850.0px;width:17px;height:17px;background:#f2f2f2;border-radius:50%;"></div>
<div class="t" style="left:1043.83px;top:793px;font-size:16.55px;color:#fff;transform:scaleX(1.0291);">Samples</div>
<div class="t" style="left:1043.13px;top:822px;font-size:16.55px;color:#fff;transform:scaleX(1.0751);">Distance</div>
<div class="t" style="left:1044.21px;top:852px;font-size:16.55px;color:#fff;transform:scaleX(1.0601);">Time</div>
<svg style="left:1358px;top:477.7px" width="484" height="354.7"><rect x="0" y="0" width="22" height="354.7" fill="#404040"/><path d="M22.0 0 V354.7 M54.5 0 V354.7 M87.0 0 V354.7 M119.4 0 V354.7 M151.9 0 V354.7 M184.4 0 V354.7 M216.9 0 V354.7 M249.4 0 V354.7 M281.8 0 V354.7 M314.3 0 V354.7 M346.8 0 V354.7 M379.3 0 V354.7 M411.8 0 V354.7 M444.2 0 V354.7 M476.7 0 V354.7 M0 71.4 H484 M0 142.6 H484 M0 213.6 H484 M0 284.8 H484" stroke="#9a9a9a" stroke-width="1.2" fill="none"/><rect x="0.5" y="0.5" width="483" height="353.7" fill="none" stroke="#9a9a9a" stroke-width="1.5"/><path d="M22 0 V354.7" stroke="#e0e000" stroke-width="1" stroke-dasharray="1.5 1.5"/><clipPath id="cc"><rect x="0" y="0" width="484" height="354.7"/></clipPath><path d="M0.6 301.6 L1.0 301.3 L1.3 297.4 L1.7 309.7 L2.0 322.5 L2.4 280.9 L2.8 301.5 L3.1 317.5 L3.5 310.8 L3.8 295.1 L4.2 331.2 L4.6 303.7 L4.9 332.9 L5.3 291.8 L5.6 323.0 L6.0 334.7 L6.4 320.0 L6.7 312.3 L7.1 299.1 L7.4 336.7 L7.8 280.4 L8.2 311.0 L8.5 303.0 L8.9 289.8 L9.2 347.2 L9.6 356.7 L10.0 335.1 L10.3 309.9 L10.7 298.4 L11.0 299.1 L11.4 299.3 L11.8 285.2 L12.1 309.7 L12.5 281.5 L12.8 351.2 L13.2 296.5 L13.6 316.0 L13.9 328.8 L14.3 296.0 L14.6 308.0 L15.0 352.7 L15.4 313.6 L15.7 296.9 L16.1 289.2 L16.4 306.2 L16.8 331.9 L17.2 313.1 L17.5 281.2 L17.9 298.8 L18.2 290.8 L18.6 321.0 L19.0 281.7 L19.3 257.6 L19.7 234.6 L20.0 212.9 L20.4 192.7 L20.8 174.3 L21.1 158.1 L21.5 145.5 L21.8 149.2 L22.2 163.2 L22.6 180.2 L22.9 199.3 L23.3 220.0 L23.6 242.2 L24.0 265.5 L24.4 289.9 L24.7 272.7 L25.1 263.2 L25.4 323.4 L25.8 290.1 L26.2 326.3 L26.5 311.6 L26.9 315.8 L27.2 306.5 L27.6 302.1 L28.0 325.4 L28.3 354.2 L28.7 344.7 L29.0 320.6 L29.4 331.0 L29.8 305.2 L30.1 355.3 L30.5 317.9 L30.8 273.4 L31.2 336.5 L31.6 340.6 L31.9 328.3 L32.3 336.2 L32.6 282.9 L33.0 290.4 L33.4 338.4 L33.7 325.2 L34.1 295.6 L34.4 298.1 L34.8 318.1 L35.2 321.1 L35.5 323.9 L35.9 320.7 L36.2 277.9 L36.6 326.4 L37.0 314.8 L37.3 309.4 L37.7 329.7 L38.0 319.4 L38.4 327.0 L38.8 322.3 L39.1 304.2 L39.5 278.0 L39.8 348.3 L40.2 307.4 L40.6 321.1 L40.9 330.6 L41.3 329.1 L41.6 273.0 L42.0 316.5 L42.4 333.0 L42.7 327.5 L43.1 316.8 L43.4 346.2 L43.8 297.6 L44.2 295.8 L44.5 316.3 L44.9 356.7 L45.2 307.8 L45.6 356.2 L46.0 337.3 L46.3 301.6 L46.7 306.9 L47.0 295.3 L47.4 317.4 L47.8 311.8 L48.1 337.3 L48.5 331.0 L48.8 338.5 L49.2 321.4 L49.6 319.7 L49.9 334.5 L50.3 323.3 L50.6 350.9 L51.0 332.5 L51.4 290.3 L51.7 322.6 L52.1 336.4 L52.4 296.0 L52.8 273.0 L53.2 312.8 L53.5 350.6 L53.9 323.4 L54.2 320.6 L54.6 308.4 L55.0 310.0 L55.3 301.4 L55.7 317.5 L56.0 345.5 L56.4 310.6 L56.8 297.9 L57.1 319.3 L57.5 331.5 L57.8 288.3 L58.2 256.5 L58.6 226.9 L58.9 199.7 L59.3 175.8 L59.6 156.7 L60.0 158.5 L60.4 178.2 L60.7 202.6 L61.1 230.0 L61.4 260.0 L61.8 291.9 L62.2 316.4 L62.5 305.8 L62.9 293.5 L63.2 326.2 L63.6 296.9 L64.0 293.0 L64.3 300.4 L64.7 264.8 L65.0 234.1 L65.4 213.1 L65.8 234.1 L66.1 264.8 L66.5 300.4 L66.8 324.3 L67.2 290.9 L67.6 336.9 L67.9 353.3 L68.3 310.0 L68.6 316.2 L69.0 307.8 L69.4 301.0 L69.7 339.3 L70.1 302.6 L70.4 317.2 L70.8 267.4 L71.2 342.1 L71.5 298.4 L71.9 271.7 L72.2 240.2 L72.6 212.5 L73.0 190.7 L73.3 194.8 L73.7 218.3 L74.0 246.9 L74.4 279.2 L74.8 313.7 L75.1 356.4 L75.5 299.8 L75.8 305.5 L76.2 272.8 L76.6 309.6 L76.9 332.8 L77.3 348.1 L77.6 281.0 L78.0 295.9 L78.4 330.7 L78.7 318.2 L79.1 296.4 L79.4 329.4 L79.8 356.7 L80.2 338.8 L80.5 325.5 L80.9 300.1 L81.2 310.7 L81.6 291.3 L82.0 308.9 L82.3 327.4 L82.7 286.4 L83.0 296.7 L83.4 315.0 L83.8 310.1 L84.1 324.0 L84.5 285.7 L84.8 322.1 L85.2 290.1 L85.6 311.5 L85.9 304.7 L86.3 335.0 L86.6 289.7 L87.0 295.0 L87.4 328.7 L87.7 305.9 L88.1 274.6 L88.4 341.0 L88.8 349.4 L89.2 321.7 L89.5 324.0 L89.9 295.3 L90.2 320.2 L90.6 292.8 L91.0 322.7 L91.3 304.7 L91.7 295.4 L92.0 312.3 L92.4 304.8 L92.8 273.1 L93.1 243.2 L93.5 215.7 L93.8 191.4 L94.2 171.6 L94.6 169.8 L94.9 188.9 L95.3 212.8 L95.6 240.0 L96.0 269.7 L96.4 285.4 L96.7 307.6 L97.1 287.7 L97.4 265.4 L97.8 239.6 L98.2 296.2 L98.5 235.0 L98.9 282.9 L99.2 265.8 L99.6 268.7 L100.0 276.5 L100.3 249.6 L100.7 223.5 L101.0 198.9 L101.4 175.8 L101.8 154.5 L102.1 135.6 L102.5 120.1 L102.8 117.3 L103.2 131.8 L103.6 150.1 L103.9 170.9 L104.3 193.6 L104.6 217.9 L105.0 243.7 L105.4 270.8 L105.7 280.8 L106.1 246.2 L106.4 289.7 L106.8 284.8 L107.2 302.2 L107.5 265.2 L107.9 286.8 L108.2 305.0 L108.6 278.6 L109.0 272.3 L109.3 273.5 L109.7 300.3 L110.0 302.8 L110.4 262.7 L110.8 294.9 L111.1 288.2 L111.5 279.0 L111.8 274.0 L112.2 295.0 L112.6 334.2 L112.9 309.1 L113.3 276.1 L113.6 264.5 L114.0 246.4 L114.4 273.4 L114.7 283.0 L115.1 267.0 L115.4 310.7 L115.8 310.1 L116.2 257.2 L116.5 300.8 L116.9 272.5 L117.2 251.2 L117.6 230.8 L118.0 211.2 L118.3 192.5 L118.7 174.9 L119.0 158.5 L119.4 143.6 L119.8 130.6 L120.1 120.7 L120.5 125.7 L120.8 137.6 L121.2 151.7 L121.6 167.5 L121.9 184.6 L122.3 202.8 L122.6 222.0 L123.0 242.1 L123.4 263.0 L123.7 252.2 L124.1 262.1 L124.4 295.9 L124.8 248.8 L125.2 313.5 L125.5 288.9 L125.9 293.8 L126.2 254.1 L126.6 249.2 L127.0 307.4 L127.3 252.9 L127.7 284.0 L128.0 274.8 L128.4 292.2 L128.8 247.3 L129.1 312.1 L129.5 329.8 L129.8 316.8 L130.2 297.8 L130.6 222.8 L130.9 305.4 L131.3 351.7 L131.6 296.9 L132.0 303.5 L132.4 317.8 L132.7 326.8 L133.1 277.5 L133.4 314.4 L133.8 297.6 L134.2 287.6 L134.5 305.5 L134.9 302.8 L135.2 333.9 L135.6 281.8 L136.0 304.7 L136.3 317.1 L136.7 297.6 L137.0 328.4 L137.4 343.4 L137.8 322.1 L138.1 297.4 L138.5 309.3 L138.8 288.5 L139.2 320.2 L139.6 326.0 L139.9 298.6 L140.3 356.7 L140.6 356.7 L141.0 304.1 L141.4 266.1 L141.7 303.7 L142.1 353.3 L142.4 316.4 L142.8 336.2 L143.2 339.3 L143.5 287.2 L143.9 356.7 L144.2 338.0 L144.6 322.2 L145.0 335.8 L145.3 324.3 L145.7 319.3 L146.0 356.2 L146.4 351.5 L146.8 314.9 L147.1 284.5 L147.5 298.7 L147.8 288.4 L148.2 304.6 L148.6 255.9 L148.9 356.7 L149.3 329.9 L149.6 292.5 L150.0 318.0 L150.4 306.1 L150.7 295.9 L151.1 264.9 L151.4 307.0 L151.8 324.8 L152.2 332.5 L152.5 333.5 L152.9 284.9 L153.2 310.0 L153.6 356.2 L154.0 356.7 L154.3 328.8 L154.7 355.9 L155.0 318.3 L155.4 356.7 L155.8 356.7 L156.1 341.5 L156.5 329.0 L156.8 352.2 L157.2 326.3 L157.6 335.4 L157.9 356.7 L158.3 329.4 L158.6 354.1 L159.0 334.7 L159.4 331.4 L159.7 327.6 L160.1 325.9 L160.4 336.1 L160.8 335.1 L161.2 330.9 L161.5 274.9 L161.9 340.9 L162.2 336.9 L162.6 356.7 L163.0 318.9 L163.3 294.9 L163.7 298.4 L164.0 315.7 L164.4 280.3 L164.8 324.0 L165.1 356.7 L165.5 309.0 L165.8 316.9 L166.2 340.5 L166.6 343.0 L166.9 343.2 L167.3 292.4 L167.6 345.6 L168.0 356.7 L168.4 341.0 L168.7 350.4 L169.1 336.0 L169.4 313.6 L169.8 310.4 L170.2 326.6 L170.5 331.4 L170.9 324.2 L171.2 315.5 L171.6 314.2 L172.0 316.0 L172.3 336.4 L172.7 322.6 L173.0 335.5 L173.4 356.7 L173.8 332.0 L174.1 345.7 L174.5 352.7 L174.8 346.8 L175.2 342.4 L175.6 323.5 L175.9 320.3 L176.3 356.7 L176.6 324.2 L177.0 353.8 L177.4 349.5 L177.7 346.1 L178.1 325.3 L178.4 332.5 L178.8 316.6 L179.2 304.6 L179.5 316.6 L179.9 340.0 L180.2 356.7 L180.6 322.3 L181.0 332.8 L181.3 356.0 L181.7 339.9 L182.0 335.9 L182.4 346.5 L182.8 333.7 L183.1 344.7 L183.5 315.9 L183.8 346.6 L184.2 329.8 L184.6 308.2 L184.9 310.9 L185.3 328.5 L185.6 327.1 L186.0 317.6 L186.4 329.6 L186.7 318.2 L187.1 326.3 L187.4 336.4 L187.8 315.3 L188.2 316.0 L188.5 356.7 L188.9 333.9 L189.2 329.2 L189.6 351.2 L190.0 346.6 L190.3 331.6 L190.7 322.1 L191.0 343.4 L191.4 331.9 L191.8 301.9 L192.1 340.3 L192.5 328.4 L192.8 356.7 L193.2 304.7 L193.6 319.3 L193.9 356.7 L194.3 335.5 L194.6 347.6 L195.0 317.8 L195.4 301.0 L195.7 315.8 L196.1 322.0 L196.4 322.1 L196.8 293.0 L197.2 291.4 L197.5 280.1 L197.9 318.9 L198.2 356.7 L198.6 335.9 L199.0 332.4 L199.3 298.4 L199.7 330.3 L200.0 327.3 L200.4 337.6 L200.8 338.8 L201.1 325.2 L201.5 322.5 L201.8 334.9 L202.2 340.8 L202.6 339.1 L202.9 316.6 L203.3 336.7 L203.6 302.8 L204.0 301.7 L204.4 297.5 L204.7 355.0 L205.1 346.5 L205.4 335.4 L205.8 317.9 L206.2 299.6 L206.5 317.0 L206.9 350.1 L207.2 344.6 L207.6 319.5 L208.0 342.2 L208.3 330.7 L208.7 343.9 L209.0 346.0 L209.4 332.6 L209.8 329.0 L210.1 331.9 L210.5 310.1 L210.8 306.6 L211.2 324.7 L211.6 346.7 L211.9 313.9 L212.3 327.8 L212.6 300.9 L213.0 318.4 L213.4 293.2 L213.7 323.3 L214.1 323.3 L214.4 354.6 L214.8 322.4 L215.2 324.4 L215.5 356.7 L215.9 332.7 L216.2 339.5 L216.6 302.3 L217.0 342.3 L217.3 341.3 L217.7 317.2 L218.0 314.9 L218.4 308.8 L218.8 317.5 L219.1 330.1 L219.5 340.3 L219.8 356.7 L220.2 319.5 L220.6 323.6 L220.9 356.7 L221.3 304.7 L221.6 302.0 L222.0 332.4 L222.4 327.8 L222.7 322.6 L223.1 330.6 L223.4 334.7 L223.8 315.7 L224.2 327.1 L224.5 323.0 L224.9 281.4 L225.2 246.2 L225.6 234.3 L226.0 264.7 L226.3 303.9 L226.7 300.9 L227.0 338.9 L227.4 346.3 L227.8 332.9 L228.1 300.0 L228.5 356.7 L228.8 354.2 L229.2 314.6 L229.6 336.5 L229.9 308.1 L230.3 299.9 L230.6 354.9 L231.0 327.7 L231.4 333.9 L231.7 282.4 L232.1 356.7 L232.4 353.0 L232.8 315.5 L233.2 307.4 L233.5 311.6 L233.9 339.4 L234.2 340.4 L234.6 356.7 L235.0 321.3 L235.3 342.1 L235.7 355.7 L236.0 340.9 L236.4 317.0 L236.8 351.5 L237.1 323.5 L237.5 312.9 L237.8 324.4 L238.2 350.9 L238.6 325.2 L238.9 355.7 L239.3 324.0 L239.6 320.5 L240.0 356.7 L240.4 314.9 L240.7 339.8 L241.1 317.9 L241.4 339.2 L241.8 302.8 L242.2 356.7 L242.5 327.8 L242.9 322.0 L243.2 317.7 L243.6 314.6 L244.0 318.9 L244.3 300.4 L244.7 266.5 L245.0 260.5 L245.4 292.2 L245.8 308.1 L246.1 316.4 L246.5 328.5 L246.8 356.7 L247.2 348.8 L247.6 327.4 L247.9 310.6 L248.3 313.4 L248.6 356.7 L249.0 309.6 L249.4 340.4 L249.7 321.1 L250.1 346.2 L250.4 318.2 L250.8 323.3 L251.2 283.0 L251.5 250.0 L251.9 250.0 L252.2 283.0 L252.6 292.8 L253.0 343.6 L253.3 304.5 L253.7 276.3 L254.0 321.3 L254.4 309.8 L254.8 328.1 L255.1 313.0 L255.5 284.5 L255.8 283.6 L256.2 287.4 L256.6 329.2 L256.9 318.8 L257.3 313.7 L257.6 340.3 L258.0 319.5 L258.4 310.9 L258.7 338.8 L259.1 300.0 L259.4 331.8 L259.8 335.2 L260.2 284.6 L260.5 320.1 L260.9 306.1 L261.2 324.9 L261.6 313.5 L262.0 333.4 L262.3 319.4 L262.7 350.1 L263.0 319.9 L263.4 343.8 L263.8 311.3 L264.1 308.5 L264.5 308.0 L264.8 321.6 L265.2 320.7 L265.6 339.9 L265.9 303.6 L266.3 354.2 L266.6 331.6 L267.0 354.3 L267.4 345.4 L267.7 356.7 L268.1 321.7 L268.4 329.1 L268.8 356.7 L269.2 355.6 L269.5 328.6 L269.9 315.7 L270.2 339.4 L270.6 330.8 L271.0 335.0 L271.3 325.9 L271.7 320.1 L272.0 345.9 L272.4 346.9 L272.8 324.8 L273.1 356.7 L273.5 309.1 L273.8 321.4 L274.2 306.5 L274.6 334.7 L274.9 297.8 L275.3 324.1 L275.6 316.6 L276.0 331.8 L276.4 333.9 L276.7 356.7 L277.1 313.3 L277.4 312.5 L277.8 331.8 L278.2 350.1 L278.5 353.8 L278.9 308.3 L279.2 356.7 L279.6 323.6 L280.0 333.8 L280.3 330.8 L280.7 308.2 L281.0 305.1 L281.4 305.1 L281.8 325.8 L282.1 281.7 L282.5 353.8 L282.8 341.3 L283.2 320.2 L283.6 356.7 L283.9 318.4 L284.3 311.2 L284.6 324.8 L285.0 343.0 L285.4 356.7 L285.7 338.9 L286.1 310.5 L286.4 352.1 L286.8 309.5 L287.2 334.8 L287.5 338.3 L287.9 329.0 L288.2 345.6 L288.6 324.9 L289.0 310.4 L289.3 326.6 L289.7 346.1 L290.0 351.2 L290.4 338.0 L290.8 312.0 L291.1 321.0 L291.5 356.7 L291.8 299.2 L292.2 337.4 L292.6 308.2 L292.9 356.7 L293.3 349.1 L293.6 323.1 L294.0 325.3 L294.4 328.9 L294.7 356.7 L295.1 345.8 L295.4 356.7 L295.8 340.0 L296.2 322.1 L296.5 314.3 L296.9 327.0 L297.2 295.3 L297.6 316.3 L298.0 323.7 L298.3 343.7 L298.7 335.5 L299.0 315.0 L299.4 275.1 L299.8 323.1 L300.1 323.2 L300.5 320.5 L300.8 328.7 L301.2 307.8 L301.6 347.3 L301.9 354.5 L302.3 330.6 L302.6 352.2 L303.0 334.7 L303.4 356.7 L303.7 331.7 L304.1 329.5 L304.4 338.8 L304.8 340.2 L305.2 337.1 L305.5 292.5 L305.9 289.4 L306.2 290.6 L306.6 351.6 L307.0 294.4 L307.3 307.4 L307.7 324.7 L308.0 321.0 L308.4 318.5 L308.8 292.3 L309.1 326.1 L309.5 340.8 L309.8 333.5 L310.2 290.5 L310.6 293.0 L310.9 299.1 L311.3 326.1 L311.6 351.4 L312.0 340.3 L312.4 301.3 L312.7 354.4 L313.1 338.8 L313.4 333.9 L313.8 340.8 L314.2 292.6 L314.5 330.2 L314.9 321.3 L315.2 355.6 L315.6 339.8 L316.0 351.9 L316.3 328.1 L316.7 316.2 L317.0 313.9 L317.4 330.3 L317.8 311.0 L318.1 314.8 L318.5 343.4 L318.8 341.1 L319.2 281.3 L319.6 310.4 L319.9 298.7 L320.3 342.1 L320.6 321.6 L321.0 330.4 L321.4 315.4 L321.7 314.8 L322.1 356.7 L322.4 356.7 L322.8 333.7 L323.2 332.3 L323.5 323.5 L323.9 354.2 L324.2 355.7 L324.6 337.2 L325.0 331.2 L325.3 356.7 L325.7 356.7 L326.0 317.7 L326.4 315.4 L326.8 297.3 L327.1 346.2 L327.5 301.6 L327.8 297.5 L328.2 323.7 L328.6 348.5 L328.9 309.1 L329.3 346.6 L329.6 335.4 L330.0 349.8 L330.4 322.3 L330.7 312.5 L331.1 356.6 L331.4 313.6 L331.8 309.0 L332.2 329.2 L332.5 333.4 L332.9 320.4 L333.2 305.7 L333.6 356.7 L334.0 333.4 L334.3 327.5 L334.7 333.6 L335.0 329.5 L335.4 338.1 L335.8 329.6 L336.1 291.8 L336.5 276.1 L336.8 305.1 L337.2 295.7 L337.6 351.1 L337.9 338.5 L338.3 337.0 L338.6 323.0 L339.0 309.2 L339.4 296.3 L339.7 329.5 L340.1 356.7 L340.4 330.5 L340.8 326.2 L341.2 314.2 L341.5 343.3 L341.9 349.3 L342.2 313.3 L342.6 336.6 L343.0 356.7 L343.3 356.7 L343.7 307.6 L344.0 318.3 L344.4 339.2 L344.8 300.8 L345.1 310.9 L345.5 327.0 L345.8 313.3 L346.2 308.1 L346.6 298.6 L346.9 300.7 L347.3 324.2 L347.6 315.6 L348.0 312.2 L348.4 329.7 L348.7 299.4 L349.1 308.9 L349.4 323.2 L349.8 345.7 L350.2 336.7 L350.5 345.5 L350.9 342.5 L351.2 356.7 L351.6 338.7 L352.0 356.7 L352.3 342.3 L352.7 325.0 L353.0 313.9 L353.4 356.7 L353.8 356.7 L354.1 349.4 L354.5 325.4 L354.8 336.8 L355.2 346.5 L355.6 354.1 L355.9 337.6 L356.3 317.9 L356.6 289.6 L357.0 309.6 L357.4 334.8 L357.7 353.9 L358.1 295.3 L358.4 324.0 L358.8 332.3 L359.2 314.5 L359.5 327.3 L359.9 356.7 L360.2 339.7 L360.6 317.9 L361.0 316.4 L361.3 339.3 L361.7 327.6 L362.0 327.2 L362.4 334.9 L362.8 328.9 L363.1 328.9 L363.5 336.7 L363.8 356.7 L364.2 339.7 L364.6 328.2 L364.9 331.7 L365.3 335.7 L365.6 330.7 L366.0 323.8 L366.4 315.2 L366.7 346.3 L367.1 321.6 L367.4 316.0 L367.8 309.6 L368.2 322.8 L368.5 356.7 L368.9 333.7 L369.2 337.2 L369.6 317.1 L370.0 316.7 L370.3 319.2 L370.7 322.0 L371.0 351.4 L371.4 324.1 L371.8 327.9 L372.1 323.5 L372.5 331.8 L372.8 338.1 L373.2 283.6 L373.6 316.3 L373.9 331.2 L374.3 347.7 L374.6 303.9 L375.0 354.7 L375.4 316.5 L375.7 303.5 L376.1 324.2 L376.4 298.7 L376.8 321.1 L377.2 281.8 L377.5 289.4 L377.9 331.9 L378.2 353.1 L378.6 337.9 L379.0 333.8 L379.3 333.8 L379.7 335.4 L380.0 355.6 L380.4 334.2 L380.8 356.7 L381.1 303.1 L381.5 339.5 L381.8 326.8 L382.2 285.0 L382.6 344.7 L382.9 343.3 L383.3 322.9 L383.6 314.0 L384.0 338.8 L384.4 325.9 L384.7 304.4 L385.1 338.1 L385.4 353.6 L385.8 326.7 L386.2 315.9 L386.5 332.4 L386.9 322.2 L387.2 326.5 L387.6 318.8 L388.0 301.9 L388.3 356.7 L388.7 329.3 L389.0 356.7 L389.4 331.3 L389.8 342.2 L390.1 342.8 L390.5 346.1 L390.8 320.5 L391.2 356.7 L391.6 356.7 L391.9 347.5 L392.3 353.2 L392.6 350.5 L393.0 349.7 L393.4 352.6 L393.7 341.7 L394.1 341.0 L394.4 323.0 L394.8 356.7 L395.2 325.4 L395.5 344.5 L395.9 337.0 L396.2 356.7 L396.6 297.3 L397.0 337.6 L397.3 327.6 L397.7 356.7 L398.0 346.1 L398.4 321.7 L398.8 347.5 L399.1 356.7 L399.5 356.7 L399.8 327.3 L400.2 336.7 L400.6 351.8 L400.9 328.7 L401.3 305.2 L401.6 317.8 L402.0 327.2 L402.4 316.5 L402.7 320.1 L403.1 334.9 L403.4 320.9 L403.8 315.7 L404.2 346.7 L404.5 303.0 L404.9 309.9 L405.2 353.9 L405.6 333.6 L406.0 327.8 L406.3 352.4 L406.7 356.7 L407.0 329.8 L407.4 328.1 L407.8 332.7 L408.1 336.0 L408.5 326.0 L408.8 310.7 L409.2 345.0 L409.6 321.9 L409.9 324.4 L410.3 289.5 L410.6 330.5 L411.0 351.0 L411.4 340.2 L411.7 333.5 L412.1 355.7 L412.4 328.8 L412.8 332.7 L413.2 306.3 L413.5 308.0 L413.9 320.9 L414.2 317.0 L414.6 312.1 L415.0 352.2 L415.3 296.1 L415.7 316.1 L416.0 330.6 L416.4 309.3 L416.8 318.0 L417.1 301.7 L417.5 341.2 L417.8 325.2 L418.2 337.4 L418.6 350.6 L418.9 322.6 L419.3 323.0 L419.6 332.0 L420.0 336.2 L420.4 309.2 L420.7 344.3 L421.1 326.7 L421.4 356.7 L421.8 356.7 L422.2 302.7 L422.5 309.4 L422.9 331.8 L423.2 320.9 L423.6 339.5 L424.0 356.7 L424.3 325.8 L424.7 356.7 L425.0 344.4 L425.4 287.5 L425.8 334.4 L426.1 348.2 L426.5 343.9 L426.8 305.4 L427.2 347.0 L427.6 295.0 L427.9 350.9 L428.3 315.0 L428.6 344.4 L429.0 314.5 L429.4 301.7 L429.7 312.1 L430.1 282.3 L430.4 300.7 L430.8 304.3 L431.2 325.6 L431.5 330.7 L431.9 349.9 L432.2 356.7 L432.6 330.4 L433.0 325.8 L433.3 288.9 L433.7 307.4 L434.0 338.4 L434.4 321.5 L434.8 332.8 L435.1 339.8 L435.5 325.4 L435.8 356.7 L436.2 335.1 L436.6 318.2 L436.9 356.7 L437.3 323.9 L437.6 350.5 L438.0 349.9 L438.4 318.1 L438.7 327.0 L439.1 345.6 L439.4 323.8 L439.8 320.7 L440.2 319.5 L440.5 352.1 L440.9 320.7 L441.2 338.9 L441.6 327.6 L442.0 331.2 L442.3 326.6 L442.7 304.3 L443.0 332.7 L443.4 302.9 L443.8 352.9 L444.1 336.2 L444.5 336.2 L444.8 332.0 L445.2 339.9 L445.6 321.6 L445.9 301.2 L446.3 335.5 L446.6 356.7 L447.0 356.7 L447.4 321.1 L447.7 350.6 L448.1 332.2 L448.4 334.8 L448.8 356.7 L449.2 325.4 L449.5 356.7 L449.9 332.2 L450.2 341.9 L450.6 311.0 L451.0 315.4 L451.3 335.1 L451.7 332.4 L452.0 347.4 L452.4 347.2 L452.8 331.0 L453.1 326.9 L453.5 356.7 L453.8 348.9 L454.2 334.3 L454.6 356.5 L454.9 315.7 L455.3 356.7 L455.6 308.3 L456.0 308.1 L456.4 328.8 L456.7 301.8 L457.1 321.0 L457.4 328.1 L457.8 314.7 L458.2 356.7 L458.5 356.7 L458.9 309.8 L459.2 334.0 L459.6 336.0 L460.0 331.5 L460.3 339.1 L460.7 341.3 L461.0 356.7 L461.4 326.5 L461.8 315.0 L462.1 329.5 L462.5 328.1 L462.8 317.6 L463.2 349.6 L463.6 327.1 L463.9 356.7 L464.3 334.7 L464.6 322.8 L465.0 330.2 L465.4 291.4 L465.7 328.2 L466.1 334.4 L466.4 304.3 L466.8 356.7 L467.2 354.7 L467.5 343.3 L467.9 329.7 L468.2 323.5 L468.6 313.3 L469.0 312.2 L469.3 299.6 L469.7 323.1 L470.0 299.5 L470.4 345.0 L470.8 301.8 L471.1 290.6 L471.5 313.7 L471.8 321.5 L472.2 334.5 L472.6 334.4 L472.9 356.7 L473.3 334.4 L473.6 319.0 L474.0 316.5 L474.4 342.7 L474.7 340.2 L475.1 321.7 L475.4 344.7 L475.8 309.0 L476.2 356.7 L476.5 314.5 L476.9 341.7 L477.2 325.3 L477.6 356.7 L478.0 308.2 L478.3 318.8 L478.7 300.8 L479.0 350.8 L479.4 356.7 L479.8 328.8 L480.1 312.3 L480.5 339.3 L480.8 320.6 L481.2 343.2 L481.6 300.2 L481.9 356.7 L482.3 319.5 L482.6 332.0 L483.0 337.1 L483.4 324.0" stroke="#f2f2f2" stroke-width="1.35" fill="none" clip-path="url(#cc)"/><path d="M22 142.59999999999997 V246.3" stroke="#ece6c0" stroke-width="3"/><circle cx="21.59999999999991" cy="142.40000000000003" r="6.3" fill="#1aa3d8"/><circle cx="59.59999999999991" cy="185.00000000000006" r="6.3" fill="#7a35d6"/><circle cx="102.59999999999991" cy="153.59999999999997" r="6.3" fill="#e0101a"/><circle cx="120.40000000000009" cy="129.90000000000003" r="6.3" fill="#f5e60a"/></svg>
<div class="t" style="left:1301.17px;top:468px;font-size:21.65px;color:#fff;transform:scaleX(0.9470);">-10.0</div>
<div class="t" style="left:1301.17px;top:539px;font-size:21.65px;color:#fff;transform:scaleX(0.9470);">-20.0</div>
<div class="t" style="left:1301.17px;top:610px;font-size:21.65px;color:#fff;transform:scaleX(0.9470);">-30.0</div>
<div class="t" style="left:1301.17px;top:681px;font-size:21.65px;color:#fff;transform:scaleX(0.9470);">-40.0</div>
<div class="t" style="left:1301.17px;top:753px;font-size:21.65px;color:#fff;transform:scaleX(0.9470);">-50.0</div>
<div class="t" style="left:1301.17px;top:822px;font-size:21.65px;color:#fff;transform:scaleX(0.9470);">-60.0</div>
<div class="t" style="left:1369.09px;top:841px;font-size:15.77px;color:#fff;transform:scaleX(0.9530);">-60</div>
<div class="t" style="left:1401.57px;top:861px;font-size:15.77px;color:#fff;transform:scaleX(0.9530);">-40</div>
<div class="t" style="left:1434.05px;top:841px;font-size:15.77px;color:#fff;transform:scaleX(0.9530);">-20</div>
<div class="t" style="left:1473.25px;top:861px;font-size:15.77px;color:#fff;transform:scaleX(0.9530);">0</div>
<div class="t" style="left:1501.49px;top:841px;font-size:15.77px;color:#fff;transform:scaleX(0.9530);">20</div>
<div class="t" style="left:1534.17px;top:861px;font-size:15.77px;color:#fff;transform:scaleX(0.9530);">40</div>
<div class="t" style="left:1566.45px;top:841px;font-size:15.77px;color:#fff;transform:scaleX(0.9530);">60</div>
<div class="t" style="left:1598.98px;top:861px;font-size:15.77px;color:#fff;transform:scaleX(0.9530);">80</div>
<div class="t" style="left:1627.03px;top:841px;font-size:15.77px;color:#fff;transform:scaleX(0.9530);">100</div>
<div class="t" style="left:1659.51px;top:861px;font-size:15.77px;color:#fff;transform:scaleX(0.9530);">120</div>
<div class="t" style="left:1691.99px;top:841px;font-size:15.77px;color:#fff;transform:scaleX(0.9530);">140</div>
<div class="t" style="left:1724.47px;top:861px;font-size:15.77px;color:#fff;transform:scaleX(0.9530);">160</div>
<div class="t" style="left:1756.95px;top:841px;font-size:15.77px;color:#fff;transform:scaleX(0.9530);">180</div>
<div class="t" style="left:1789.62px;top:861px;font-size:15.77px;color:#fff;transform:scaleX(0.9530);">200</div>
<div class="t" style="left:1822.10px;top:841px;font-size:15.77px;color:#fff;transform:scaleX(0.9530);">220</div>
<div class="t" style="left:1489.74px;top:884px;font-size:21.82px;color:#fff;transform:scaleX(0.9232);">Distance Difference (km)</div>
<div class="t" style="left:1259.70px;top:724.44px;font-size:23.13px;color:#fff;transform:rotate(-90deg) scaleX(0.8583)">Magnitude (dB)</div>
</body></html>
